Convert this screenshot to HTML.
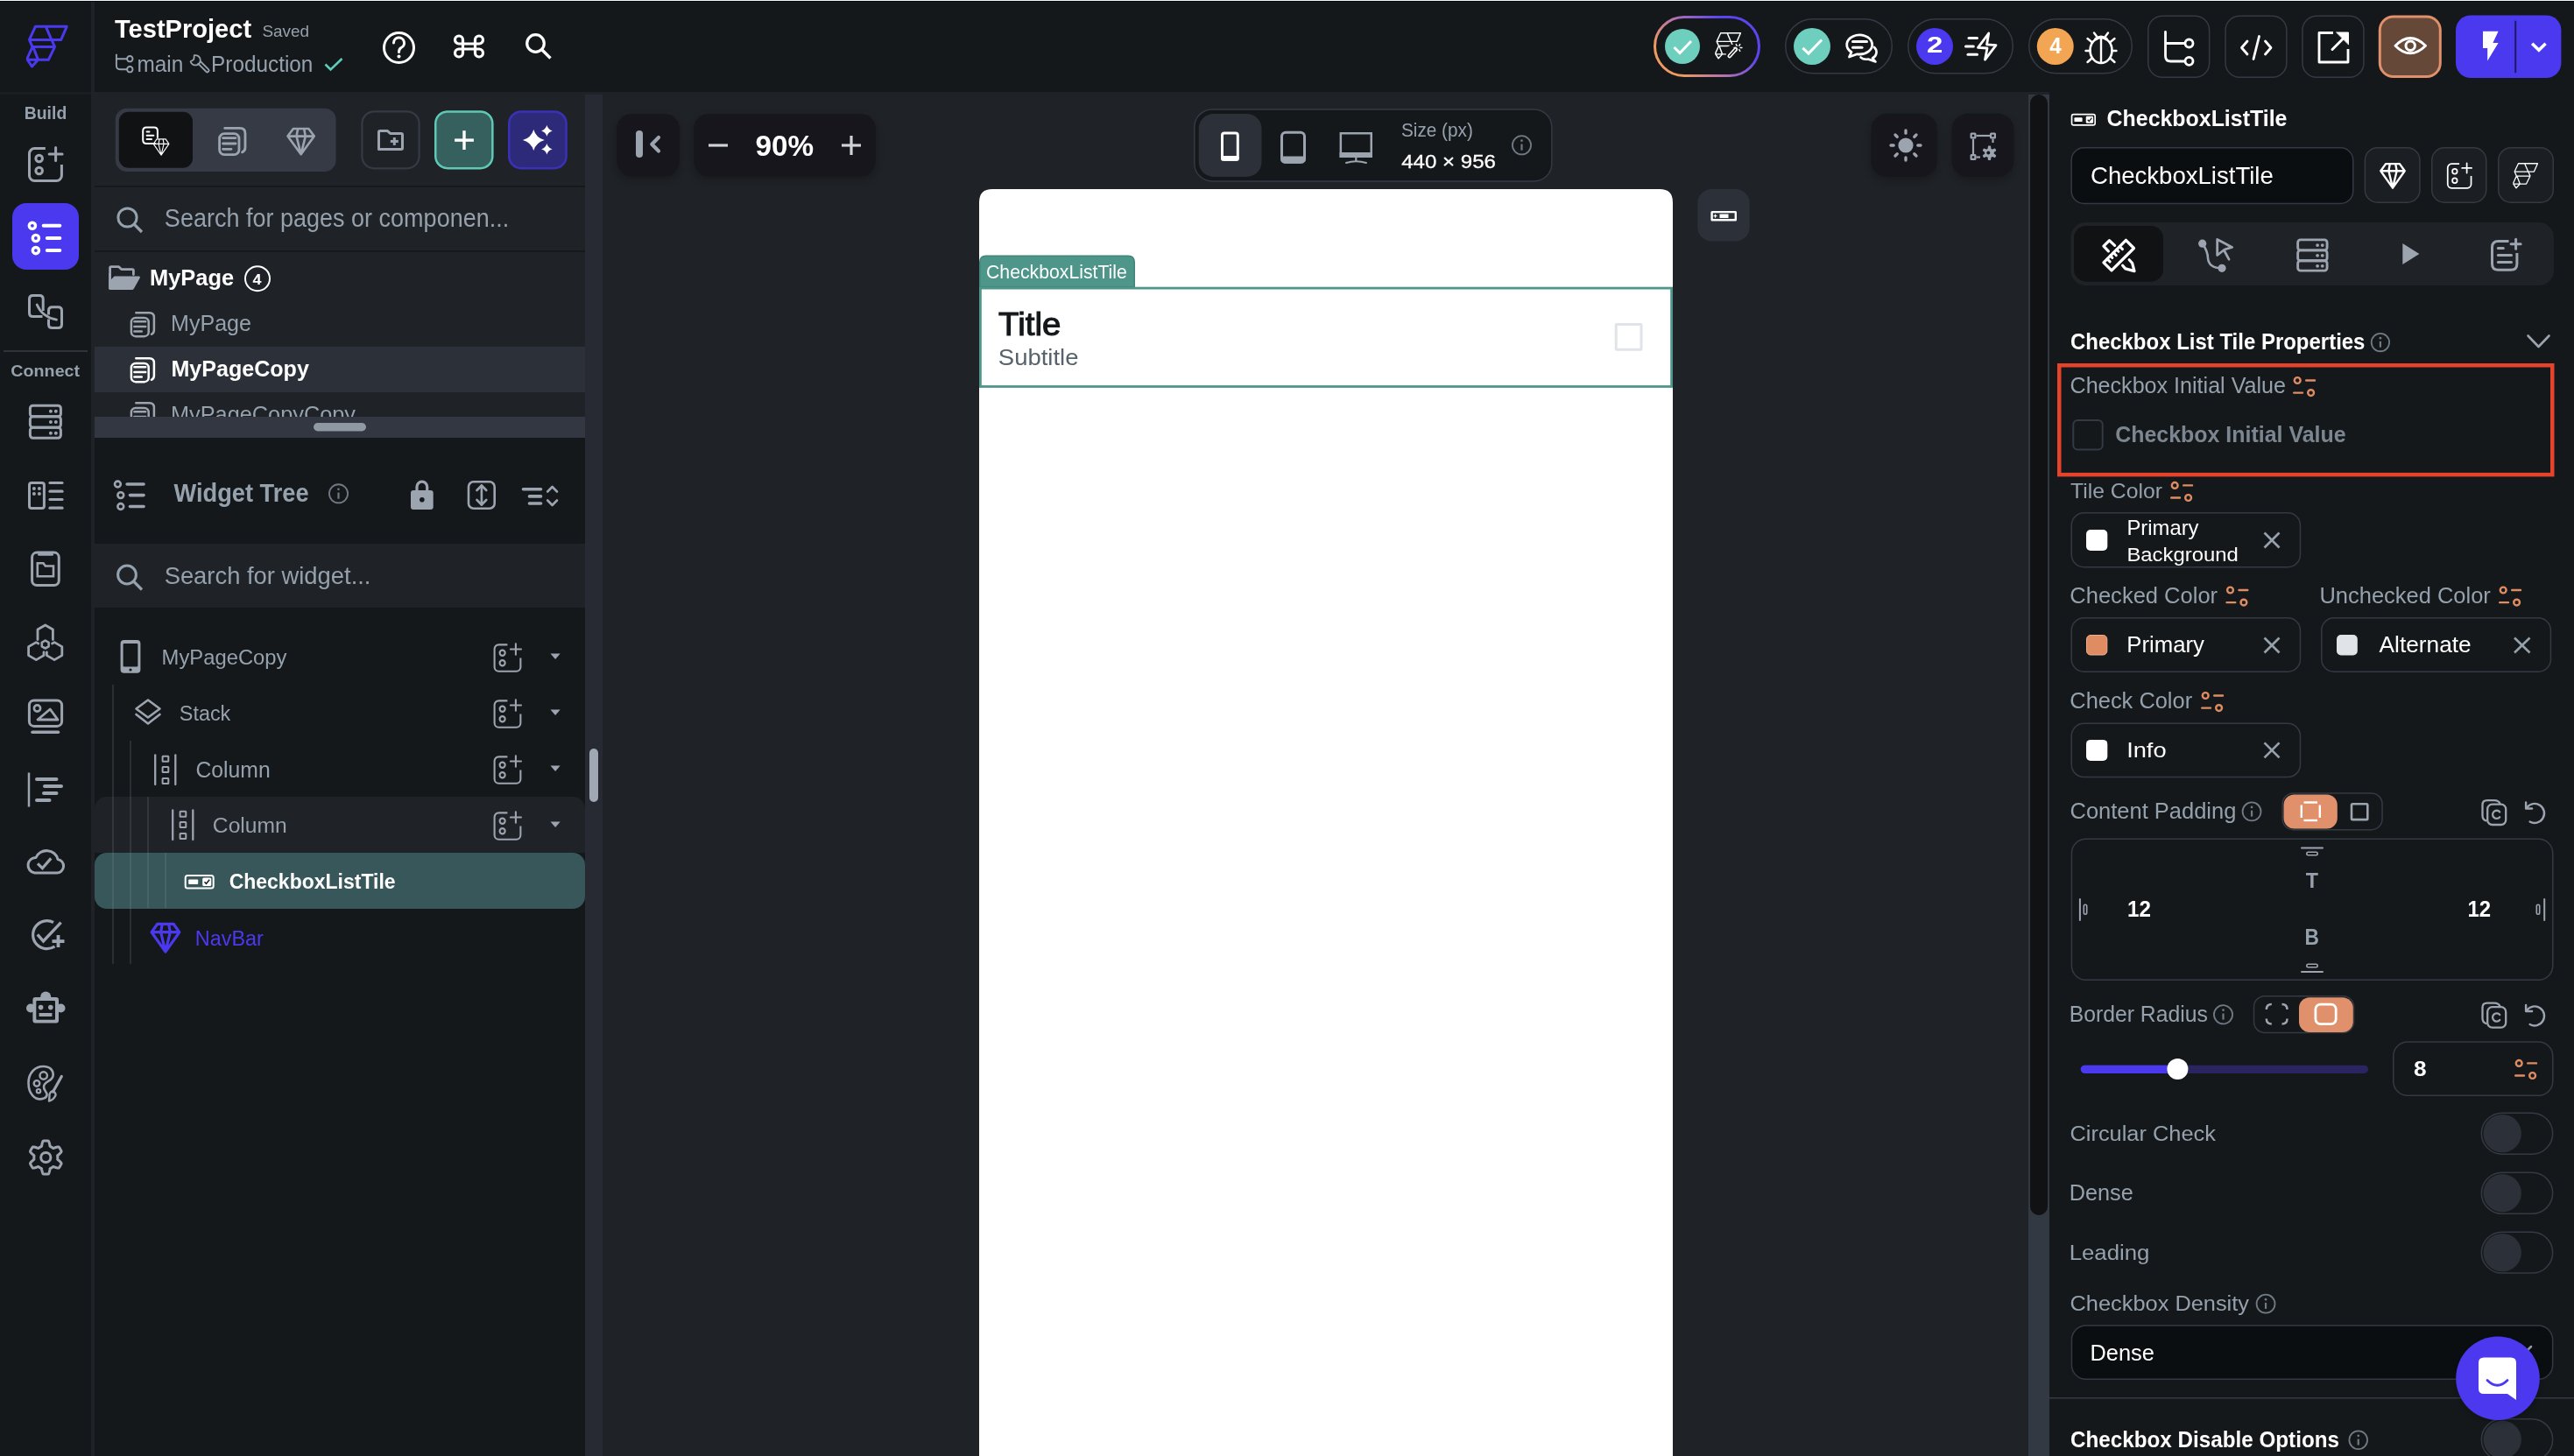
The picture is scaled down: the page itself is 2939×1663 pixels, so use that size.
<!DOCTYPE html>
<html><head><meta charset="utf-8"><title>FlutterFlow</title>
<style>
html,body{margin:0;padding:0;background:#1f2226;overflow:hidden;width:2939px;height:1663px}
svg{display:block;font-family:"Liberation Sans",sans-serif}
text{font-family:"Liberation Sans",sans-serif;white-space:pre}
svg{will-change:transform}
</style></head><body>
<svg width="2939" height="1663" viewBox="0 0 2939 1663">
<defs><linearGradient id="gradb" x1="0" y1="0.75" x2="1" y2="0.25"><stop offset="0.1" stop-color="#f09a60"/><stop offset="0.45" stop-color="#b070b0"/><stop offset="0.8" stop-color="#5a45f0"/></linearGradient>
<filter id="shadow" x="-30%" y="-30%" width="160%" height="160%"><feDropShadow dx="0" dy="4" stdDeviation="6" flood-color="#000" flood-opacity="0.25"/></filter>
<filter id="shadow2" x="-30%" y="-30%" width="160%" height="160%"><feDropShadow dx="0" dy="2" stdDeviation="4" flood-color="#000" flood-opacity="0.3"/></filter>
<clipPath id="clipPages"><rect x="108" y="440" width="560" height="36"/></clipPath>
</defs>
<rect x="0.00" y="0.00" width="2939.00" height="1663.00" rx="0" fill="#1f2226" />
<rect x="0.00" y="0.00" width="2939.00" height="105.00" rx="0" fill="#15181b" />
<rect x="0.00" y="0.00" width="2939.00" height="1.00" rx="0" fill="#f0f6fa" />
<rect x="0.00" y="1.00" width="2939.00" height="1.00" rx="0" fill="#05090c" />
<rect x="104.00" y="2.00" width="4.00" height="103.00" rx="0" fill="#1f2226" />
<rect x="0.00" y="105.00" width="104.00" height="1558.00" rx="0" fill="#15181b" />
<rect x="0.00" y="105.00" width="104.00" height="3.00" rx="0" fill="#1b1e21" />
<rect x="108.00" y="105.00" width="560.00" height="371.00" rx="0" fill="#1f2226" />
<rect x="108.00" y="500.00" width="560.00" height="1163.00" rx="0" fill="#15181b" />
<rect x="668.00" y="108.00" width="20.00" height="1555.00" rx="0" fill="#272a33" />
<rect x="673.00" y="855.00" width="10.00" height="61.00" rx="5" fill="#a0a8b4" />
<rect x="2316.00" y="108.00" width="24.00" height="1555.00" rx="0" fill="#333943" />
<rect x="2318.00" y="108.00" width="20.00" height="1280.00" rx="10" fill="#111214" />
<rect x="2340.00" y="105.00" width="599.00" height="1558.00" rx="0" fill="#15181b" />
<text x="131.00" y="43.00" font-size="28.57" font-weight="700" fill="#fff" textLength="156.14" lengthAdjust="spacingAndGlyphs" >TestProject</text>
<text x="299.41" y="42.00" font-size="19.00" font-weight="400" fill="#95a1ac" textLength="53.65" lengthAdjust="spacingAndGlyphs" >Saved</text>
<text x="156.47" y="82.00" font-size="26.37" font-weight="400" fill="#95a1ac" textLength="52.90" lengthAdjust="spacingAndGlyphs" >main</text>
<text x="241.10" y="82.00" font-size="25.00" font-weight="400" fill="#95a1ac" textLength="116.27" lengthAdjust="spacingAndGlyphs" >Production</text>
<rect x="2038.75" y="21.75" width="121.50" height="62.00" rx="31.25" fill="none" stroke="#343a44" stroke-width="1.5" />
<rect x="2178.75" y="21.75" width="119.50" height="62.00" rx="31.25" fill="none" stroke="#343a44" stroke-width="1.5" />
<rect x="2316.75" y="21.75" width="117.50" height="62.00" rx="31.25" fill="none" stroke="#343a44" stroke-width="1.5" />
<rect x="1889.50" y="19.50" width="119.00" height="67.00" rx="33.50" fill="none" stroke="url(#gradb)" stroke-width="3" />
<circle cx="1921.00" cy="53.00" r="20.00" fill="#6fcfbf" />
<circle cx="2069.00" cy="53.00" r="21.00" fill="#6fcfbf" />
<circle cx="2209.00" cy="53.00" r="21.00" fill="#4b39ef" />
<circle cx="2346.75" cy="53.00" r="21.00" fill="#f2a552" />
<text x="2199.97" y="60.40" font-size="26.29" font-weight="700" fill="#fff" textLength="18.35" lengthAdjust="spacingAndGlyphs" >2</text>
<text x="2340.30" y="60.70" font-size="25.57" font-weight="700" fill="#fff" textLength="13.45" lengthAdjust="spacingAndGlyphs" >4</text>
<rect x="2452.75" y="18.15" width="69.90" height="70.10" rx="16.25" fill="none" stroke="#343a44" stroke-width="1.5" />
<rect x="2541.05" y="18.15" width="69.80" height="70.10" rx="16.25" fill="none" stroke="#343a44" stroke-width="1.5" />
<rect x="2628.95" y="18.15" width="70.00" height="70.10" rx="16.25" fill="none" stroke="#343a44" stroke-width="1.5" />
<rect x="2717.30" y="18.90" width="69.00" height="68.60" rx="15.50" fill="#664838" stroke="#e0906a" stroke-width="3" />
<rect x="2804.00" y="17.40" width="120.40" height="71.60" rx="17" fill="#4b39ef" />
<rect x="2871.20" y="23.70" width="2.00" height="59.50" rx="0" fill="#1f1a60" />
<text x="27.79" y="136.00" font-size="19.29" font-weight="700" fill="#95a1ac" textLength="48.45" lengthAdjust="spacingAndGlyphs" >Build</text>
<rect x="14.00" y="232.00" width="76.00" height="76.00" rx="16" fill="#4b39ef" />
<rect x="4.00" y="400.00" width="96.00" height="2.00" rx="0" fill="#2f343b" />
<text x="12.39" y="430.00" font-size="18.86" font-weight="700" fill="#95a1ac" textLength="78.71" lengthAdjust="spacingAndGlyphs" >Connect</text>
<rect x="131.80" y="123.70" width="251.80" height="72.30" rx="13" fill="#353a45" />
<rect x="135.80" y="127.80" width="84.20" height="64.00" rx="11" fill="#111214" />
<rect x="413.40" y="127.30" width="65.20" height="65.00" rx="13.90" fill="none" stroke="#353a45" stroke-width="2.2" />
<rect x="497.25" y="127.45" width="65.10" height="64.70" rx="13.75" fill="#35605e" stroke="#5fc9b6" stroke-width="2.5" />
<rect x="581.25" y="127.45" width="65.30" height="64.70" rx="13.75" fill="#2e2a7a" stroke="#3b31b8" stroke-width="2.5" />
<rect x="108.00" y="212.00" width="560.00" height="2.00" rx="0" fill="#16181b" />
<text x="187.86" y="259.00" font-size="28.57" font-weight="400" fill="#95a1ac" textLength="393.38" lengthAdjust="spacingAndGlyphs" >Search for pages or componen...</text>
<rect x="108.00" y="286.00" width="560.00" height="2.00" rx="0" fill="#16181b" />
<text x="171.01" y="326.30" font-size="25.57" font-weight="700" fill="#fff" textLength="96.12" lengthAdjust="spacingAndGlyphs" >MyPage</text>
<circle cx="294.00" cy="318.20" r="14.00" fill="none" stroke="#fff" stroke-width="2" />
<text x="288.60" y="325.20" font-size="17.14" font-weight="700" fill="#fff" textLength="9.99" lengthAdjust="spacingAndGlyphs" >4</text>
<text x="195.04" y="378.30" font-size="25.29" font-weight="400" fill="#95a1ac" textLength="91.97" lengthAdjust="spacingAndGlyphs" >MyPage</text>
<rect x="108.00" y="396.00" width="560.00" height="52.00" rx="0" fill="#2c3039" />
<text x="195.43" y="430.00" font-size="25.14" font-weight="700" fill="#fff" textLength="157.41" lengthAdjust="spacingAndGlyphs" >MyPageCopy</text>
<g clip-path="url(#clipPages)">
<text x="195.02" y="482.00" font-size="25.71" font-weight="400" fill="#95a1ac" textLength="210.98" lengthAdjust="spacingAndGlyphs" >MyPageCopyCopy</text>
</g>
<rect x="108.00" y="476.00" width="560.00" height="24.00" rx="0" fill="#323741" />
<rect x="358.00" y="483.00" width="60.00" height="9.50" rx="4.75" fill="#8f98a3" />
<text x="198.50" y="573.00" font-size="28.57" font-weight="700" fill="#95a1ac" textLength="154.18" lengthAdjust="spacingAndGlyphs" >Widget Tree</text>
<rect x="108.00" y="621.00" width="560.00" height="73.00" rx="0" fill="#1f2226" />
<text x="187.64" y="666.60" font-size="28.00" font-weight="400" fill="#95a1ac" textLength="235.83" lengthAdjust="spacingAndGlyphs" >Search for widget...</text>
<text x="184.64" y="759.00" font-size="23.43" font-weight="400" fill="#95a1ac" textLength="142.86" lengthAdjust="spacingAndGlyphs" >MyPageCopy</text>
<text x="204.77" y="822.80" font-size="23.14" font-weight="400" fill="#95a1ac" textLength="58.57" lengthAdjust="spacingAndGlyphs" >Stack</text>
<text x="223.44" y="887.50" font-size="25.29" font-weight="400" fill="#95a1ac" textLength="85.25" lengthAdjust="spacingAndGlyphs" >Column</text>
<rect x="108.00" y="910.00" width="560.00" height="64.00" rx="14" fill="#1f2226" />
<rect x="108.00" y="950.00" width="560.00" height="24.00" rx="0" fill="#1f2226" />
<text x="242.84" y="950.70" font-size="23.14" font-weight="400" fill="#95a1ac" textLength="84.94" lengthAdjust="spacingAndGlyphs" >Column</text>
<rect x="108.00" y="974.00" width="560.00" height="64.00" rx="14" fill="#37575a" />
<text x="261.68" y="1015.00" font-size="23.57" font-weight="700" fill="#fff" textLength="189.89" lengthAdjust="spacingAndGlyphs" >CheckboxListTile</text>
<text x="222.77" y="1079.50" font-size="24.29" font-weight="400" fill="#4b39ef" textLength="78.15" lengthAdjust="spacingAndGlyphs" >NavBar</text>
<rect x="128.25" y="782.00" width="1.50" height="319.00" rx="0" fill="#a0a8b4" fill-opacity="0.22"/>
<rect x="148.25" y="846.00" width="1.50" height="255.00" rx="0" fill="#a0a8b4" fill-opacity="0.22"/>
<rect x="168.25" y="910.00" width="1.50" height="127.00" rx="0" fill="#a0a8b4" fill-opacity="0.22"/>
<rect x="188.25" y="974.00" width="1.50" height="63.00" rx="0" fill="#a0a8b4" fill-opacity="0.22"/>
<rect x="704.00" y="130.00" width="72.00" height="71.50" rx="17" fill="#15181b" filter="url(#shadow)"/>
<rect x="792.00" y="130.00" width="208.00" height="71.50" rx="17" fill="#15181b" filter="url(#shadow)"/>
<text x="862.46" y="178.40" font-size="32.86" font-weight="700" fill="#fff" textLength="66.61" lengthAdjust="spacingAndGlyphs" >90%</text>
<rect x="1363.75" y="124.95" width="408.10" height="82.00" rx="20.25" fill="#15181b" stroke="#343a44" stroke-width="1.5" />
<rect x="1368.70" y="130.00" width="71.80" height="71.90" rx="17" fill="#2c3039" />
<text x="1599.95" y="156.00" font-size="21.43" font-weight="400" fill="#95a1ac" textLength="81.92" lengthAdjust="spacingAndGlyphs" >Size (px)</text>
<text x="1600.22" y="192.00" font-size="22.86" font-weight="400" fill="#fff" textLength="107.75" lengthAdjust="spacingAndGlyphs" stroke="#fff" stroke-width="0.3">440 × 956</text>
<rect x="2136.30" y="129.80" width="75.50" height="72.20" rx="18" fill="#15181b" filter="url(#shadow)"/>
<rect x="2228.50" y="129.80" width="71.00" height="72.20" rx="18" fill="#15181b" filter="url(#shadow)"/>
<rect x="1938.30" y="216.00" width="59.40" height="59.40" rx="16" fill="#2c3039" />
<path d="M1118,1663 L1118,231 Q1118,216 1133,216 L1895,216 Q1910,216 1910,231 L1910,1663 Z" fill="#ffffff" />
<path d="M1118.8,327.7 L1118.8,299.4 Q1118.8,292.2 1126,292.2 L1288,292.2 Q1295.2,292.2 1295.2,299.4 L1295.2,327.7 Z" fill="#4f968a" stroke="#428579" stroke-width="1.6" stroke-linejoin="round" stroke-linecap="round" />
<text x="1126.00" y="317.90" font-size="21.71" font-weight="400" fill="#fff" textLength="160.86" lengthAdjust="spacingAndGlyphs" >CheckboxListTile</text>
<rect x="1119.40" y="329.10" width="789.20" height="112.40" rx="0.00" fill="none" stroke="#4f968a" stroke-width="2.8" />
<text x="1140.10" y="383.00" font-size="37.14" font-weight="400" fill="#14181b" textLength="71.26" lengthAdjust="spacingAndGlyphs" stroke="#14181b" stroke-width="1.1">Title</text>
<text x="1139.84" y="417.00" font-size="24.86" font-weight="400" fill="#57636c" textLength="91.67" lengthAdjust="spacingAndGlyphs" >Subtitle</text>
<rect x="1845.20" y="370.50" width="28.80" height="28.80" rx="0.50" fill="none" stroke="#e0e3e7" stroke-width="3" />
<text x="2405.62" y="144.20" font-size="26.00" font-weight="700" fill="#fff" textLength="205.80" lengthAdjust="spacingAndGlyphs" >CheckboxListTile</text>
<rect x="2365.15" y="168.75" width="321.60" height="63.70" rx="14.25" fill="#0b0e11" stroke="#343a44" stroke-width="1.5" />
<text x="2387.01" y="209.70" font-size="27.57" font-weight="400" fill="#fff" textLength="208.81" lengthAdjust="spacingAndGlyphs" >CheckboxListTile</text>
<rect x="2700.35" y="168.75" width="62.60" height="62.50" rx="14.25" fill="#1b1e22" stroke="#343a43" stroke-width="1.5" />
<rect x="2776.75" y="168.75" width="62.00" height="62.50" rx="14.25" fill="#1b1e22" stroke="#343a43" stroke-width="1.5" />
<rect x="2852.75" y="168.75" width="62.50" height="62.50" rx="14.25" fill="#1b1e22" stroke="#343a43" stroke-width="1.5" />
<rect x="2364.40" y="254.00" width="551.60" height="72.00" rx="17" fill="#1f2226" />
<rect x="2368.00" y="258.00" width="102.00" height="63.70" rx="14" fill="#111214" />
<text x="2363.95" y="398.50" font-size="25.71" font-weight="700" fill="#fff" textLength="336.52" lengthAdjust="spacingAndGlyphs" >Checkbox List Tile Properties</text>
<rect x="2351.25" y="417.25" width="563.00" height="124.90" rx="0.00" fill="none" stroke="#e5432b" stroke-width="4.5" />
<text x="2363.52" y="449.00" font-size="25.71" font-weight="400" fill="#95a1ac" textLength="246.49" lengthAdjust="spacingAndGlyphs" >Checkbox Initial Value</text>
<rect x="2367.30" y="480.00" width="33.40" height="33.40" rx="5.00" fill="none" stroke="#343a43" stroke-width="2" />
<text x="2415.22" y="505.20" font-size="26.00" font-weight="700" fill="#7c8690" textLength="263.40" lengthAdjust="spacingAndGlyphs" >Checkbox Initial Value</text>
<text x="2364.11" y="569.30" font-size="24.71" font-weight="400" fill="#95a1ac" textLength="104.81" lengthAdjust="spacingAndGlyphs" >Tile Color</text>
<rect x="2365.25" y="585.75" width="261.20" height="62.00" rx="14.25" fill="none" stroke="#343a44" stroke-width="1.5" />
<rect x="2382.00" y="605.00" width="24.30" height="23.90" rx="5" fill="#ffffff" />
<text x="2428.44" y="610.80" font-size="24.00" font-weight="400" fill="#fff" textLength="82.06" lengthAdjust="spacingAndGlyphs" >Primary</text>
<text x="2428.43" y="640.50" font-size="22.14" font-weight="400" fill="#fff" textLength="127.41" lengthAdjust="spacingAndGlyphs" >Background</text>
<text x="2363.30" y="689.00" font-size="24.86" font-weight="400" fill="#95a1ac" textLength="168.82" lengthAdjust="spacingAndGlyphs" >Checked Color</text>
<text x="2648.41" y="689.00" font-size="24.86" font-weight="400" fill="#95a1ac" textLength="195.42" lengthAdjust="spacingAndGlyphs" >Unchecked Color</text>
<rect x="2365.25" y="705.75" width="261.20" height="61.50" rx="14.25" fill="none" stroke="#343a44" stroke-width="1.5" />
<rect x="2382.50" y="725.50" width="23.30" height="22.50" rx="4.50" fill="#e08c62" stroke="#f0b090" stroke-width="1" />
<text x="2428.29" y="744.80" font-size="24.86" font-weight="400" fill="#fff" textLength="88.71" lengthAdjust="spacingAndGlyphs" >Primary</text>
<rect x="2650.75" y="705.75" width="261.70" height="61.50" rx="14.25" fill="none" stroke="#343a44" stroke-width="1.5" />
<rect x="2668.00" y="725.00" width="23.80" height="23.50" rx="5" fill="#e0e3e7" />
<text x="2716.60" y="744.80" font-size="24.86" font-weight="400" fill="#fff" textLength="105.06" lengthAdjust="spacingAndGlyphs" >Alternate</text>
<text x="2363.31" y="809.40" font-size="24.86" font-weight="400" fill="#95a1ac" textLength="139.82" lengthAdjust="spacingAndGlyphs" >Check Color</text>
<rect x="2365.25" y="826.25" width="261.20" height="61.30" rx="14.25" fill="none" stroke="#343a44" stroke-width="1.5" />
<rect x="2382.00" y="844.90" width="24.30" height="24.10" rx="5" fill="#ffffff" />
<text x="2428.17" y="864.70" font-size="24.71" font-weight="400" fill="#fff" textLength="45.43" lengthAdjust="spacingAndGlyphs" >Info</text>
<text x="2363.51" y="935.30" font-size="25.71" font-weight="400" fill="#95a1ac" textLength="189.83" lengthAdjust="spacingAndGlyphs" >Content Padding</text>
<rect x="2606.15" y="906.05" width="113.90" height="41.60" rx="12.25" fill="none" stroke="#343a44" stroke-width="1.5" />
<rect x="2607.50" y="907.40" width="61.30" height="39.20" rx="12" fill="#e0906a" />
<rect x="2365.45" y="958.25" width="549.30" height="161.00" rx="16.25" fill="none" stroke="#343a44" stroke-width="1.5" />
<text x="2632.80" y="1014.40" font-size="24.14" font-weight="700" fill="#95a1ac" textLength="14.23" lengthAdjust="spacingAndGlyphs" >T</text>
<text x="2631.38" y="1079.00" font-size="25.14" font-weight="700" fill="#95a1ac" textLength="16.41" lengthAdjust="spacingAndGlyphs" >B</text>
<text x="2428.99" y="1047.00" font-size="25.29" font-weight="700" fill="#fff" textLength="26.91" lengthAdjust="spacingAndGlyphs" >12</text>
<text x="2817.51" y="1047.00" font-size="25.29" font-weight="700" fill="#fff" textLength="26.59" lengthAdjust="spacingAndGlyphs" >12</text>
<text x="2362.77" y="1167.00" font-size="25.86" font-weight="400" fill="#95a1ac" textLength="158.00" lengthAdjust="spacingAndGlyphs" >Border Radius</text>
<rect x="2573.55" y="1137.75" width="114.10" height="41.70" rx="12.25" fill="none" stroke="#343a44" stroke-width="1.5" />
<rect x="2625.00" y="1139.20" width="61.80" height="39.70" rx="12" fill="#e0906a" />
<rect x="2375.70" y="1216.70" width="328.30" height="9.20" rx="4.6" fill="#2a2560" />
<rect x="2375.70" y="1216.70" width="110.30" height="9.20" rx="4.6" fill="#4b39ef" />
<circle cx="2486.40" cy="1221.00" r="12.00" fill="#ffffff" />
<rect x="2732.75" y="1190.05" width="182.00" height="61.20" rx="16.25" fill="none" stroke="#343a44" stroke-width="1.5" />
<text x="2755.98" y="1228.50" font-size="23.57" font-weight="700" fill="#fff" textLength="14.57" lengthAdjust="spacingAndGlyphs" >8</text>
<text x="2363.51" y="1303.00" font-size="24.29" font-weight="400" fill="#95a1ac" textLength="166.39" lengthAdjust="spacingAndGlyphs" >Circular Check</text>
<text x="2362.73" y="1371.00" font-size="25.00" font-weight="400" fill="#95a1ac" textLength="73.00" lengthAdjust="spacingAndGlyphs" >Dense</text>
<text x="2362.69" y="1438.60" font-size="24.29" font-weight="400" fill="#95a1ac" textLength="91.76" lengthAdjust="spacingAndGlyphs" >Leading</text>
<rect x="2833.35" y="1271.15" width="81.30" height="47.00" rx="23.50" fill="none" stroke="#343a44" stroke-width="1.5" />
<circle cx="2857.20" cy="1294.65" r="21.70" fill="#2c3039" />
<rect x="2833.35" y="1339.25" width="81.30" height="47.00" rx="23.50" fill="none" stroke="#343a44" stroke-width="1.5" />
<circle cx="2857.20" cy="1362.75" r="21.70" fill="#2c3039" />
<rect x="2833.35" y="1407.25" width="81.30" height="46.80" rx="23.50" fill="none" stroke="#343a44" stroke-width="1.5" />
<circle cx="2857.20" cy="1430.65" r="21.70" fill="#2c3039" />
<rect x="2833.35" y="1620.75" width="81.30" height="47.00" rx="23.50" fill="none" stroke="#343a44" stroke-width="1.5" />
<circle cx="2857.20" cy="1644.25" r="21.70" fill="#2c3039" />
<text x="2363.51" y="1496.70" font-size="24.29" font-weight="400" fill="#95a1ac" textLength="204.49" lengthAdjust="spacingAndGlyphs" >Checkbox Density</text>
<rect x="2365.45" y="1513.95" width="549.20" height="61.30" rx="16.25" fill="#0b0e11" stroke="#343a44" stroke-width="1.5" />
<text x="2386.52" y="1553.50" font-size="26.43" font-weight="400" fill="#fff" textLength="73.31" lengthAdjust="spacingAndGlyphs" >Dense</text>
<rect x="2340.00" y="1596.00" width="599.00" height="1.50" rx="0" fill="#343a44" />
<text x="2363.94" y="1652.70" font-size="25.43" font-weight="700" fill="#fff" textLength="307.04" lengthAdjust="spacingAndGlyphs" >Checkbox Disable Options</text>
<path d="M2878,1538 L2884,1544 L2890,1538" fill="none" stroke="#95a1ac" stroke-width="2.5" stroke-linejoin="round" stroke-linecap="round" />
<circle cx="2852.00" cy="1574.25" r="47.75" fill="#4b39ef" filter="url(#shadow2)"/>
<g transform="translate(30.00,29.00) scale(1.0000,1.0000)"><path d="M10.5,1.2 H46.3 L39.7,16.4 H3.5 Z M22.2,1.2 L28.8,16.4 M3.5,16.4 L7,24.6 H32.5 L29,16.4 M7,24.6 L1.4,37 V39.3 H25.3 L32.5,24.6 M8,25 L13.5,39.3 L6.5,47 L1.4,39.3" fill="none" stroke="#4b39ef" stroke-width="3" stroke-linejoin="round" stroke-linecap="round"/></g>
<path d="M132.9,61.8 V75 Q132.9,79.2 137.1,79.2 H145 M132.9,67.2 H145" fill="none" stroke="#95a1ac" stroke-width="1.9" stroke-linejoin="round" stroke-linecap="butt" />
<circle cx="148.30" cy="67.20" r="3.20" fill="none" stroke="#95a1ac" stroke-width="1.9" />
<circle cx="148.30" cy="79.20" r="3.20" fill="none" stroke="#95a1ac" stroke-width="1.9" />
<path d="M217.6,70.2 A5.7,5.7 0 1 0 221.8,63.2 L221.4,67.2 Q221.3,68.2 220.5,68.5 Z" fill="none" stroke="#95a1ac" stroke-width="1.8" stroke-linejoin="round" stroke-linecap="round" />
<path d="M226.2,72.6 L235.6,82 Q236.6,83 237.6,82 L238.2,81.4 Q239.2,80.4 238.2,79.4 L228.8,70" fill="none" stroke="#95a1ac" stroke-width="1.8" stroke-linejoin="round" stroke-linecap="round" />
<path d="M371.5,73.5 L377.5,79.5 L390.5,67" fill="none" stroke="#5ccdbb" stroke-width="2.6" stroke-linejoin="miter" stroke-linecap="butt" />
<circle cx="455.50" cy="54.50" r="17.00" fill="none" stroke="#fff" stroke-width="3" />
<path d="M449.5,49 A6,6 0 1 1 458,54.5 Q455.5,56 455.5,59.5" fill="none" stroke="#fff" stroke-width="3" stroke-linejoin="round" stroke-linecap="round" />
<circle cx="455.50" cy="64.50" r="2.00" fill="#fff" />
<path d="M528.5,45.5 V60.5 A4.5,4.5 0 1 1 524,56 H547 A4.5,4.5 0 1 1 542.5,60.5 V45.5 A4.5,4.5 0 1 1 547,50 H524 A4.5,4.5 0 1 1 528.5,45.5 Z" fill="none" stroke="#fff" stroke-width="3.2" stroke-linejoin="round" stroke-linecap="round" />
<circle cx="611.50" cy="49.50" r="9.80" fill="none" stroke="#fff" stroke-width="3.2" />
<line x1="618.50" y1="56.50" x2="628.50" y2="66.50" stroke="#fff" stroke-width="3.4" stroke-linecap="butt" />
<path d="M1911.5,54 L1918,60.5 L1931,47" fill="none" stroke="#fff" stroke-width="3" stroke-linejoin="miter" stroke-linecap="butt" />
<g transform="translate(1958.00,37.00) scale(0.6354,0.6327)"><path d="M10.5,1.2 H46.3 L39.7,16.4 H3.5 Z M22.2,1.2 L28.8,16.4 M3.5,16.4 L7,24.6 H32.5 L29,16.4 M7,24.6 L1.4,37 V39.3 H25.3 L32.5,24.6 M8,25 L13.5,39.3 L6.5,47 L1.4,39.3" fill="none" stroke="#fff" stroke-width="2.3" stroke-linejoin="round" stroke-linecap="round"/></g>
<circle cx="1980.00" cy="60.00" r="9.50" fill="#15181b" />
<line x1="1974.80" y1="64.00" x2="1981.80" y2="56.20" stroke="#fff" stroke-width="4.6" stroke-linecap="round" />
<line x1="1974.80" y1="64.00" x2="1981.80" y2="56.20" stroke="#15181b" stroke-width="1.4" stroke-linecap="round" />
<line x1="1987.00" y1="54.50" x2="1989.00" y2="54.50" stroke="#fff" stroke-width="1.4" stroke-linecap="round" />
<line x1="1985.75" y1="56.67" x2="1986.75" y2="58.40" stroke="#fff" stroke-width="1.4" stroke-linecap="round" />
<line x1="1983.25" y1="56.67" x2="1982.25" y2="58.40" stroke="#fff" stroke-width="1.4" stroke-linecap="round" />
<line x1="1982.00" y1="54.50" x2="1980.00" y2="54.50" stroke="#fff" stroke-width="1.4" stroke-linecap="round" />
<line x1="1983.25" y1="52.33" x2="1982.25" y2="50.60" stroke="#fff" stroke-width="1.4" stroke-linecap="round" />
<line x1="1985.75" y1="52.33" x2="1986.75" y2="50.60" stroke="#fff" stroke-width="1.4" stroke-linecap="round" />
<path d="M2058.4,54.9 L2065,61.1 L2080.1,45.5" fill="none" stroke="#fff" stroke-width="3" stroke-linejoin="miter" stroke-linecap="butt" />
<path d="M2111.5,65 L2114,59.5 A14.5,11 0 1 1 2120.5,61.8 Z" fill="none" stroke="#fff" stroke-width="2.8" stroke-linejoin="round" stroke-linecap="round" />
<line x1="2115.50" y1="47.50" x2="2131.50" y2="47.50" stroke="#fff" stroke-width="3" stroke-linecap="round" />
<line x1="2115.50" y1="54.20" x2="2126.00" y2="54.20" stroke="#fff" stroke-width="3" stroke-linecap="round" />
<path d="M2140,54 A9,8 0 0 1 2138,66.5 L2141.5,70.5 L2133,67.5 Q2128,68.5 2124.5,65.5" fill="none" stroke="#fff" stroke-width="2.6" stroke-linejoin="round" stroke-linecap="round" />
<path d="M2270.7,38 L2258.5,54.3 L2269,55 L2266.5,68.2 L2279,51.6 L2268.6,50.8 Z" fill="none" stroke="#fff" stroke-width="2.8" stroke-linejoin="round" stroke-linecap="round" />
<line x1="2248.00" y1="43.60" x2="2257.50" y2="43.60" stroke="#fff" stroke-width="3" stroke-linecap="round" />
<line x1="2244.50" y1="52.90" x2="2253.30" y2="52.90" stroke="#fff" stroke-width="3" stroke-linecap="round" />
<line x1="2247.00" y1="62.20" x2="2257.50" y2="62.20" stroke="#fff" stroke-width="3" stroke-linecap="round" />
<ellipse cx="2399" cy="57.5" rx="12.5" ry="14.5" fill="none" stroke="#fff" stroke-width="2.6"/>
<path d="M2393,44.5 Q2399,40 2405,44.5" fill="none" stroke="#fff" stroke-width="3.5" stroke-linejoin="round" stroke-linecap="round" />
<line x1="2399.00" y1="45.00" x2="2399.00" y2="71.50" stroke="#fff" stroke-width="2.4" stroke-linecap="round" />
<line x1="2383.50" y1="44.00" x2="2389.00" y2="48.50" stroke="#fff" stroke-width="2.4" stroke-linecap="round" />
<line x1="2414.50" y1="44.00" x2="2409.00" y2="48.50" stroke="#fff" stroke-width="2.4" stroke-linecap="round" />
<line x1="2381.50" y1="58.00" x2="2386.50" y2="58.00" stroke="#fff" stroke-width="2.4" stroke-linecap="round" />
<line x1="2411.50" y1="58.00" x2="2416.50" y2="58.00" stroke="#fff" stroke-width="2.4" stroke-linecap="round" />
<line x1="2383.50" y1="71.00" x2="2388.00" y2="67.00" stroke="#fff" stroke-width="2.4" stroke-linecap="round" />
<line x1="2414.50" y1="71.00" x2="2410.00" y2="67.00" stroke="#fff" stroke-width="2.4" stroke-linecap="round" />
<line x1="2391.00" y1="37.50" x2="2394.00" y2="41.50" stroke="#fff" stroke-width="2.4" stroke-linecap="round" />
<line x1="2407.00" y1="37.50" x2="2404.00" y2="41.50" stroke="#fff" stroke-width="2.4" stroke-linecap="round" />
<path d="M2472.5,36.5 V64 Q2472.5,70 2478.5,70 H2494.5 M2472.5,49.5 H2494.5" fill="none" stroke="#fff" stroke-width="2.8" stroke-linejoin="round" stroke-linecap="round" />
<circle cx="2499.50" cy="49.50" r="4.50" fill="none" stroke="#fff" stroke-width="2.8" />
<circle cx="2499.50" cy="69.80" r="4.50" fill="none" stroke="#fff" stroke-width="2.8" />
<path d="M2566,47 L2559.5,54.5 L2566,62 M2586.5,47 L2593,54.5 L2586.5,62 M2579.5,41.5 L2573,67.5" fill="none" stroke="#fff" stroke-width="2.8" stroke-linejoin="round" stroke-linecap="round" />
<path d="M2664,37.5 H2648 V71 H2681 V56" fill="none" stroke="#fff" stroke-width="2.8" stroke-linejoin="round" stroke-linecap="butt" />
<path d="M2663,56.5 L2676,43.5" fill="none" stroke="#fff" stroke-width="3" stroke-linejoin="round" stroke-linecap="round" />
<path d="M2668,37 H2681.5 V50.5 Z" fill="#fff" stroke="#fff" stroke-width="1" stroke-linejoin="round" stroke-linecap="round" />
<path d="M2735,52.2 Q2752,35 2769.5,52.2 Q2752,69.5 2735,52.2 Z" fill="none" stroke="#fff" stroke-width="3" stroke-linejoin="round" stroke-linecap="round" />
<circle cx="2752.20" cy="52.20" r="5.20" fill="none" stroke="#fff" stroke-width="3" />
<path d="M2835,35.8 H2852.6 L2846.4,49 H2852.6 L2840.2,69.6 V55.1 H2835 Z" fill="#fff" />
<path d="M2891.2,49.7 L2898.9,57.2 L2906.6,49.7" fill="none" stroke="#fff" stroke-width="3.6" stroke-linejoin="miter" stroke-linecap="butt" />
<g transform="translate(31.50,168.00) scale(0.9976,1.0000)"><g fill="none" stroke="#9ca4b0" stroke-width="3" stroke-linecap="butt" stroke-linejoin="round"><path d="M20.4,1.6 H8 A6,6 0 0 0 2,7.6 V32.5 A6,6 0 0 0 8,38.5 H33 A6,6 0 0 0 39,32.5 V20"/><circle cx="13.2" cy="13" r="3.8"/><circle cx="13.2" cy="27" r="3.8"/><path d="M32.2,0.4 V15.4 M24.7,7.9 H39.7" stroke-linecap="round"/></g></g>
<circle cx="36.90" cy="257.80" r="3.60" fill="none" stroke="#fff" stroke-width="3.4" />
<line x1="49.70" y1="257.80" x2="68.30" y2="257.80" stroke="#fff" stroke-width="4" stroke-linecap="round" />
<circle cx="40.90" cy="272.00" r="3.60" fill="none" stroke="#fff" stroke-width="3.4" />
<line x1="53.80" y1="272.00" x2="68.30" y2="272.00" stroke="#fff" stroke-width="4" stroke-linecap="round" />
<circle cx="40.90" cy="286.10" r="3.60" fill="none" stroke="#fff" stroke-width="3.4" />
<line x1="53.80" y1="286.10" x2="68.30" y2="286.10" stroke="#fff" stroke-width="4" stroke-linecap="round" />
<path d="M49.2,355 V341.5 Q49.2,337.5 45.2,337.5 H37.5 Q33.5,337.5 33.5,341.5 V357.5 Q33.5,361.5 37.5,361.5 H48.5" fill="none" stroke="#9ca4b0" stroke-width="3" stroke-linejoin="round" stroke-linecap="butt" />
<path d="M55.5,359.5 V354.7 Q55.5,350.7 59.5,350.7 H66.5 Q70.5,350.7 70.5,354.7 V370.5 Q70.5,374.5 66.5,374.5 H59.5 Q55.5,374.5 55.5,370.5 V364.5" fill="none" stroke="#9ca4b0" stroke-width="3" stroke-linejoin="round" stroke-linecap="butt" />
<path d="M42.2,348 Q48,362 64.5,365.2" fill="none" stroke="#9ca4b0" stroke-width="2.8" stroke-linejoin="round" stroke-linecap="round" />
<g transform="translate(32.90,461.70) scale(1.0000,1.0025)"><g fill="none" stroke="#9ca4b0" stroke-width="3" stroke-linejoin="round"><rect x="1.5" y="1.5" width="35" height="12.6" rx="3.2"/><rect x="1.5" y="14.1" width="35" height="12.4" rx="3.2"/><rect x="1.5" y="26.5" width="35" height="12" rx="3.2"/></g><g fill="#9ca4b0"><circle cx="25" cy="8" r="2"/><circle cx="30.9" cy="8" r="2"/><circle cx="25" cy="20.3" r="2"/><circle cx="30.9" cy="20.3" r="2"/><circle cx="25" cy="32.9" r="2"/><circle cx="30.9" cy="32.9" r="2"/></g></g>
<rect x="33.50" y="551.50" width="16.90" height="29.00" rx="2.50" fill="none" stroke="#9ca4b0" stroke-width="3" />
<circle cx="38.90" cy="558.00" r="2.00" fill="#9ca4b0" />
<circle cx="44.90" cy="558.00" r="2.00" fill="#9ca4b0" />
<circle cx="38.90" cy="564.00" r="2.00" fill="#9ca4b0" />
<circle cx="44.90" cy="564.00" r="2.00" fill="#9ca4b0" />
<line x1="57.00" y1="551.50" x2="71.00" y2="551.50" stroke="#9ca4b0" stroke-width="3.2" stroke-linecap="round" />
<line x1="57.00" y1="561.20" x2="71.00" y2="561.20" stroke="#9ca4b0" stroke-width="3.2" stroke-linecap="round" />
<line x1="57.00" y1="570.50" x2="71.00" y2="570.50" stroke="#9ca4b0" stroke-width="3.2" stroke-linecap="round" />
<line x1="57.00" y1="580.20" x2="71.00" y2="580.20" stroke="#9ca4b0" stroke-width="3.2" stroke-linecap="round" />
<rect x="36.60" y="631.10" width="30.65" height="37.40" rx="5.50" fill="none" stroke="#9ca4b0" stroke-width="3" />
<line x1="44.50" y1="633.30" x2="59.50" y2="633.30" stroke="#9ca4b0" stroke-width="3" stroke-linecap="round" />
<path d="M42.8,643.2 H49.5 L51.8,646.5 H61 V658.2 H42.8 Z" fill="none" stroke="#9ca4b0" stroke-width="2.6" stroke-linejoin="miter" stroke-linecap="round" />
<path d="M43,730.5 V719 L51.7,714 L60.4,719 V730.5" fill="none" stroke="#9ca4b0" stroke-width="2.8" stroke-linejoin="round" stroke-linecap="round" />
<path d="M43.8,735 L41.3,733.6 L32.6,738.6 V748.6 L41.3,753.6 L50,748.6 V745" fill="none" stroke="#9ca4b0" stroke-width="2.8" stroke-linejoin="round" stroke-linecap="round" />
<path d="M59.6,735 L62.1,733.6 L70.8,738.6 V748.6 L62.1,753.6 L53.4,748.6 V745" fill="none" stroke="#9ca4b0" stroke-width="2.8" stroke-linejoin="round" stroke-linecap="round" />
<path d="M51.7,731.5 L55.6,733.8 V738.3 L51.7,740.5 L47.8,738.3 V733.8 Z" fill="none" stroke="#9ca4b0" stroke-width="2.6" stroke-linejoin="round" stroke-linecap="round" />
<rect x="33.40" y="800.00" width="37.20" height="29.40" rx="5.50" fill="none" stroke="#9ca4b0" stroke-width="3" />
<circle cx="42.50" cy="809.00" r="3.60" fill="none" stroke="#9ca4b0" stroke-width="2.6" />
<path d="M43,822 L57.2,810 L66,822 Z" fill="none" stroke="#9ca4b0" stroke-width="2.8" stroke-linejoin="round" stroke-linecap="round" />
<line x1="37.00" y1="836.20" x2="66.50" y2="836.20" stroke="#9ca4b0" stroke-width="3.5" stroke-linecap="round" />
<line x1="33.00" y1="882.50" x2="33.00" y2="921.50" stroke="#9ca4b0" stroke-width="2.5" stroke-linecap="butt" />
<line x1="42.00" y1="890.00" x2="64.50" y2="890.00" stroke="#9ca4b0" stroke-width="4" stroke-linecap="round" />
<line x1="51.00" y1="897.90" x2="70.00" y2="897.90" stroke="#9ca4b0" stroke-width="4" stroke-linecap="round" />
<line x1="50.00" y1="905.90" x2="64.50" y2="905.90" stroke="#9ca4b0" stroke-width="4" stroke-linecap="round" />
<line x1="42.00" y1="914.00" x2="56.50" y2="914.00" stroke="#9ca4b0" stroke-width="4" stroke-linecap="round" />
<path d="M39.5,997 H64.5 A7.8,7.8 0 0 0 66,981.5 A13,12 0 0 0 41,979.5 A8.8,8.8 0 0 0 39.5,997 Z" fill="none" stroke="#9ca4b0" stroke-width="3" stroke-linejoin="round" stroke-linecap="round" />
<path d="M43,986.4 L48.4,991.7 L58.2,980.4" fill="none" stroke="#9ca4b0" stroke-width="3.2" stroke-linejoin="miter" stroke-linecap="butt" />
<path d="M61,1053.5 A16,16 0 1 0 62.5,1081" fill="none" stroke="#9ca4b0" stroke-width="3.2" stroke-linejoin="round" stroke-linecap="butt" />
<path d="M42.8,1067.3 L49.5,1075 L69.6,1053.7" fill="none" stroke="#9ca4b0" stroke-width="3.4" stroke-linejoin="miter" stroke-linecap="butt" />
<line x1="59.50" y1="1075.10" x2="73.50" y2="1075.10" stroke="#9ca4b0" stroke-width="3.8" stroke-linecap="butt" />
<line x1="66.50" y1="1068.00" x2="66.50" y2="1082.00" stroke="#9ca4b0" stroke-width="3.8" stroke-linecap="butt" />
<circle cx="52.20" cy="1138.50" r="6.00" fill="#9ca4b0" />
<circle cx="35.00" cy="1151.50" r="5.00" fill="#9ca4b0" />
<circle cx="69.50" cy="1151.50" r="5.00" fill="#9ca4b0" />
<rect x="37.40" y="1139.00" width="29.60" height="29.50" rx="3" fill="#9ca4b0" />
<rect x="41.30" y="1143.00" width="21.70" height="21.70" rx="1" fill="#15181b" />
<circle cx="46.60" cy="1150.60" r="2.80" fill="#9ca4b0" />
<circle cx="57.80" cy="1150.60" r="2.80" fill="#9ca4b0" />
<rect x="44.60" y="1157.00" width="14.80" height="4.00" rx="0" fill="#9ca4b0" />
<path d="M50,1254.5 C40,1258 32.5,1249 32.5,1237 C32.5,1225 40.5,1218 49.5,1218 C57.5,1218 61.5,1223 60.5,1229 C59.5,1235 50.5,1235 50,1241 C49.5,1246 54.5,1247 53.5,1251 Q52.5,1254 50,1254.5 Z" fill="none" stroke="#9ca4b0" stroke-width="2.6" stroke-linejoin="round" stroke-linecap="round" />
<circle cx="49.70" cy="1228.50" r="4.20" fill="none" stroke="#9ca4b0" stroke-width="2.4" />
<circle cx="42.00" cy="1237.40" r="3.30" fill="none" stroke="#9ca4b0" stroke-width="2.4" />
<circle cx="44.00" cy="1246.20" r="2.20" fill="none" stroke="#9ca4b0" stroke-width="2.2" />
<path d="M70.3,1229.5 L60.5,1247" fill="none" stroke="#9ca4b0" stroke-width="3.2" stroke-linejoin="round" stroke-linecap="round" />
<path d="M60,1246 Q56,1248 56.5,1252 L56,1257.5 Q61,1256.5 63.5,1251 Q64,1248 60,1246 Z" fill="none" stroke="#9ca4b0" stroke-width="2.4" stroke-linejoin="round" stroke-linecap="round" />
<path d="M65.80,1322.00 L65.80,1322.35 L65.78,1322.71 L65.76,1323.06 L65.73,1323.41 L65.68,1323.76 L65.63,1324.11 L66.08,1324.55 L66.72,1325.07 L67.38,1325.62 L68.04,1326.22 L68.68,1326.85 L69.28,1327.52 L69.82,1328.20 L70.13,1328.84 L69.95,1329.31 L69.75,1329.77 L69.54,1330.22 L69.32,1330.67 L69.09,1331.11 L68.84,1331.55 L68.59,1331.98 L68.32,1332.40 L68.04,1332.82 L67.75,1333.23 L67.45,1333.63 L67.14,1334.02 L66.43,1334.07 L65.57,1333.95 L64.70,1333.76 L63.83,1333.53 L62.98,1333.25 L62.16,1332.96 L61.40,1332.65 L60.80,1332.49 L60.52,1332.71 L60.24,1332.92 L59.95,1333.13 L59.65,1333.32 L59.35,1333.51 L59.05,1333.69 L58.74,1333.86 L58.43,1334.03 L58.11,1334.18 L57.79,1334.33 L57.47,1334.47 L57.14,1334.60 L56.98,1335.21 L56.86,1336.02 L56.71,1336.87 L56.52,1337.74 L56.29,1338.62 L56.01,1339.47 L55.69,1340.28 L55.29,1340.86 L54.79,1340.94 L54.30,1341.00 L53.80,1341.04 L53.30,1341.07 L52.80,1341.09 L52.30,1341.10 L51.80,1341.09 L51.30,1341.07 L50.80,1341.04 L50.30,1341.00 L49.81,1340.94 L49.31,1340.86 L48.91,1340.28 L48.59,1339.47 L48.31,1338.62 L48.08,1337.74 L47.89,1336.87 L47.74,1336.02 L47.62,1335.21 L47.46,1334.60 L47.13,1334.47 L46.81,1334.33 L46.49,1334.18 L46.17,1334.03 L45.86,1333.86 L45.55,1333.69 L45.25,1333.51 L44.95,1333.32 L44.65,1333.13 L44.36,1332.92 L44.08,1332.71 L43.80,1332.49 L43.20,1332.65 L42.44,1332.96 L41.62,1333.25 L40.77,1333.53 L39.90,1333.76 L39.03,1333.95 L38.17,1334.07 L37.46,1334.02 L37.15,1333.63 L36.85,1333.23 L36.56,1332.82 L36.28,1332.40 L36.01,1331.98 L35.76,1331.55 L35.51,1331.11 L35.28,1330.67 L35.06,1330.22 L34.85,1329.77 L34.65,1329.31 L34.47,1328.84 L34.78,1328.20 L35.32,1327.52 L35.92,1326.85 L36.56,1326.22 L37.22,1325.62 L37.88,1325.07 L38.52,1324.55 L38.97,1324.11 L38.92,1323.76 L38.87,1323.41 L38.84,1323.06 L38.82,1322.71 L38.80,1322.35 L38.80,1322.00 L38.80,1321.65 L38.82,1321.29 L38.84,1320.94 L38.87,1320.59 L38.92,1320.24 L38.97,1319.89 L38.52,1319.45 L37.88,1318.93 L37.22,1318.38 L36.56,1317.78 L35.92,1317.15 L35.32,1316.48 L34.78,1315.80 L34.47,1315.16 L34.65,1314.69 L34.85,1314.23 L35.06,1313.78 L35.28,1313.33 L35.51,1312.89 L35.76,1312.45 L36.01,1312.02 L36.28,1311.60 L36.56,1311.18 L36.85,1310.77 L37.15,1310.37 L37.46,1309.98 L38.17,1309.93 L39.03,1310.05 L39.90,1310.24 L40.77,1310.47 L41.62,1310.75 L42.44,1311.04 L43.20,1311.35 L43.80,1311.51 L44.08,1311.29 L44.36,1311.08 L44.65,1310.87 L44.95,1310.68 L45.25,1310.49 L45.55,1310.31 L45.86,1310.14 L46.17,1309.97 L46.49,1309.82 L46.81,1309.67 L47.13,1309.53 L47.46,1309.40 L47.62,1308.79 L47.74,1307.98 L47.89,1307.13 L48.08,1306.26 L48.31,1305.38 L48.59,1304.53 L48.91,1303.72 L49.31,1303.14 L49.81,1303.06 L50.30,1303.00 L50.80,1302.96 L51.30,1302.93 L51.80,1302.91 L52.30,1302.90 L52.80,1302.91 L53.30,1302.93 L53.80,1302.96 L54.30,1303.00 L54.79,1303.06 L55.29,1303.14 L55.69,1303.72 L56.01,1304.53 L56.29,1305.38 L56.52,1306.26 L56.71,1307.13 L56.86,1307.98 L56.98,1308.79 L57.14,1309.40 L57.47,1309.53 L57.79,1309.67 L58.11,1309.82 L58.43,1309.97 L58.74,1310.14 L59.05,1310.31 L59.35,1310.49 L59.65,1310.68 L59.95,1310.87 L60.24,1311.08 L60.52,1311.29 L60.80,1311.51 L61.40,1311.35 L62.16,1311.04 L62.98,1310.75 L63.83,1310.47 L64.70,1310.24 L65.57,1310.05 L66.43,1309.93 L67.14,1309.98 L67.45,1310.37 L67.75,1310.77 L68.04,1311.18 L68.32,1311.60 L68.59,1312.02 L68.84,1312.45 L69.09,1312.89 L69.32,1313.33 L69.54,1313.78 L69.75,1314.23 L69.95,1314.69 L70.13,1315.16 L69.82,1315.80 L69.28,1316.48 L68.68,1317.15 L68.04,1317.78 L67.38,1318.38 L66.72,1318.93 L66.08,1319.45 L65.63,1319.89 L65.68,1320.24 L65.73,1320.59 L65.76,1320.94 L65.78,1321.29 L65.80,1321.65 Z" fill="none" stroke="#9ca4b0" stroke-width="3" stroke-linejoin="round" stroke-linecap="round" />
<circle cx="52.30" cy="1322.00" r="5.60" fill="none" stroke="#9ca4b0" stroke-width="3" />
<path d="M177,164 H167.2 Q163.2,164 163.2,160 V149.5 Q163.2,145.5 167.2,145.5 H175.9 Q179.9,145.5 179.9,149.5 V157" fill="none" stroke="#fff" stroke-width="2" stroke-linejoin="round" stroke-linecap="round" />
<line x1="167.60" y1="150.40" x2="170.50" y2="150.40" stroke="#fff" stroke-width="2" stroke-linecap="round" />
<line x1="167.60" y1="154.70" x2="175.40" y2="154.70" stroke="#fff" stroke-width="2" stroke-linecap="round" />
<line x1="167.60" y1="159.00" x2="173.00" y2="159.00" stroke="#fff" stroke-width="2" stroke-linecap="round" />
<g transform="translate(174.40,158.20) scale(0.5864,0.6188)"><g fill="none" stroke="#fff" stroke-width="1.9" stroke-linejoin="round" stroke-linecap="round"><path d="M7.8,1.2 H25.2 L31.6,9.9 L16.5,30.6 L1.4,9.9 Z M1.4,9.9 H31.6 M13,1.2 L11.4,9.9 L16.5,30.6 L21.6,9.9 L20,1.2"/></g></g>
<g transform="translate(248.00,145.00) scale(1.1296,1.1186)"><g fill="none" stroke="#9ca4b0" stroke-width="2.5" stroke-linecap="round" stroke-linejoin="round"><rect x="2.3" y="6.9" width="19.8" height="21.3" rx="5"/><path d="M7.7,1.3 H23 Q28.3,1.3 28.3,6.6 V21 Q28.3,24.5 25.3,25.8"/><path d="M5.8,11.2 H18.6 M5.8,17 H18.6 M5.8,22.6 H14.2"/></g></g>
<g transform="translate(327.10,145.75) scale(1.0030,0.9953)"><g fill="none" stroke="#9ca4b0" stroke-width="2.6" stroke-linejoin="round" stroke-linecap="round"><path d="M7.8,1.2 H25.2 L31.6,9.9 L16.5,30.6 L1.4,9.9 Z M1.4,9.9 H31.6 M13,1.2 L11.4,9.9 L16.5,30.6 L21.6,9.9 L20,1.2"/></g></g>
<path d="M432.5,170.5 V151 Q432.5,149.4 434,149.4 H442.2 L445.6,152.4 H458 Q459.5,152.4 459.5,154 V169 Q459.5,170.5 458,170.5 Z" fill="none" stroke="#9ca4b0" stroke-width="3" stroke-linejoin="round" stroke-linecap="round" />
<line x1="450.30" y1="157.00" x2="450.30" y2="165.90" stroke="#9ca4b0" stroke-width="3" stroke-linecap="butt" />
<line x1="445.80" y1="161.40" x2="454.80" y2="161.40" stroke="#9ca4b0" stroke-width="3" stroke-linecap="butt" />
<line x1="530.00" y1="149.20" x2="530.00" y2="171.00" stroke="#fff" stroke-width="3.4" stroke-linecap="butt" />
<line x1="519.10" y1="160.10" x2="540.90" y2="160.10" stroke="#fff" stroke-width="3.4" stroke-linecap="butt" />
<path d="M609.3,148.1 Q612.0279999999999,157.46 621.6999999999999,160.1 Q612.0279999999999,162.73999999999998 609.3,172.1 Q606.572,162.73999999999998 596.9,160.1 Q606.572,157.46 609.3,148.1 Z" fill="#fff" />
<path d="M624.4,143.1 Q625.786,148.014 630.6999999999999,149.4 Q625.786,150.786 624.4,155.70000000000002 Q623.014,150.786 618.1,149.4 Q623.014,148.014 624.4,143.1 Z" fill="#fff" />
<path d="M624.4,164.0 Q625.786,168.91400000000002 630.6999999999999,170.3 Q625.786,171.686 624.4,176.60000000000002 Q623.014,171.686 618.1,170.3 Q623.014,168.91400000000002 624.4,164.0 Z" fill="#fff" />
<circle cx="145.50" cy="248.50" r="10.60" fill="none" stroke="#95a1ac" stroke-width="3" />
<line x1="153.00" y1="256.00" x2="162.00" y2="265.00" stroke="#95a1ac" stroke-width="3.2" stroke-linecap="butt" />
<path d="M125.6,328 V306 Q125.6,304.6 127,304.6 H135.4 L138.6,307.6 H151 Q152.4,307.6 152.4,309 V313.5" fill="none" stroke="#9ca4b0" stroke-width="2.8" stroke-linejoin="round" stroke-linecap="round" />
<path d="M124.2,322 L130.5,315.5 H158.5 Q160.5,315.5 159.7,317.5 L153,329.5 Q152.2,331 150.5,331 H126 Q124.2,331 124.2,329.5 Z" fill="#9ca4b0" />
<rect x="124.20" y="312.00" width="2.80" height="18.00" rx="0" fill="#9ca4b0" />
<g transform="translate(147.60,356.00) scale(1.0000,1.0000)"><g fill="none" stroke="#9ca4b0" stroke-width="2.5" stroke-linecap="round" stroke-linejoin="round"><rect x="2.3" y="6.9" width="19.8" height="21.3" rx="5"/><path d="M7.7,1.3 H23 Q28.3,1.3 28.3,6.6 V21 Q28.3,24.5 25.3,25.8"/><path d="M5.8,11.2 H18.6 M5.8,17 H18.6 M5.8,22.6 H14.2"/></g></g>
<g transform="translate(147.60,408.00) scale(1.0000,1.0000)"><g fill="none" stroke="#fff" stroke-width="2.5" stroke-linecap="round" stroke-linejoin="round"><rect x="2.3" y="6.9" width="19.8" height="21.3" rx="5"/><path d="M7.7,1.3 H23 Q28.3,1.3 28.3,6.6 V21 Q28.3,24.5 25.3,25.8"/><path d="M5.8,11.2 H18.6 M5.8,17 H18.6 M5.8,22.6 H14.2"/></g></g>
<g clip-path="url(#clipPages)">
<g transform="translate(147.60,459.00) scale(1.0000,1.0000)"><g fill="none" stroke="#9ca4b0" stroke-width="2.5" stroke-linecap="round" stroke-linejoin="round"><rect x="2.3" y="6.9" width="19.8" height="21.3" rx="5"/><path d="M7.7,1.3 H23 Q28.3,1.3 28.3,6.6 V21 Q28.3,24.5 25.3,25.8"/><path d="M5.8,11.2 H18.6 M5.8,17 H18.6 M5.8,22.6 H14.2"/></g></g>
</g>
<circle cx="134.40" cy="553.00" r="3.40" fill="none" stroke="#9ca4b0" stroke-width="2.6" />
<line x1="145.10" y1="553.00" x2="164.00" y2="553.00" stroke="#9ca4b0" stroke-width="3.6" stroke-linecap="round" />
<circle cx="137.80" cy="565.60" r="3.40" fill="none" stroke="#9ca4b0" stroke-width="2.6" />
<line x1="148.50" y1="565.60" x2="164.00" y2="565.60" stroke="#9ca4b0" stroke-width="3.6" stroke-linecap="round" />
<circle cx="137.80" cy="578.50" r="3.40" fill="none" stroke="#9ca4b0" stroke-width="2.6" />
<line x1="148.50" y1="578.50" x2="164.00" y2="578.50" stroke="#9ca4b0" stroke-width="3.6" stroke-linecap="round" />
<circle cx="386.50" cy="563.85" r="10.60" fill="none" stroke="#6f7a85" stroke-width="1.8" />
<circle cx="386.50" cy="558.76" r="1.35" fill="#6f7a85" />
<line x1="386.50" y1="562.58" x2="386.50" y2="569.68" stroke="#6f7a85" stroke-width="2.2" stroke-linecap="butt" />
<path d="M476,561 V556 A5.85,5.85 0 0 1 487.7,556 V561" fill="none" stroke="#9ca4b0" stroke-width="3.2" stroke-linejoin="round" stroke-linecap="round" />
<rect x="469.00" y="560.00" width="25.70" height="22.00" rx="3" fill="#9ca4b0" />
<circle cx="481.85" cy="570.70" r="2.80" fill="#15181b" />
<rect x="535.00" y="550.30" width="29.70" height="30.40" rx="5.70" fill="none" stroke="#9ca4b0" stroke-width="2.6" />
<line x1="549.90" y1="554.50" x2="549.90" y2="576.50" stroke="#9ca4b0" stroke-width="2.6" stroke-linecap="round" />
<path d="M544.5,560 L549.9,554.5 L555.3,560 M544.5,571 L549.9,576.5 L555.3,571" fill="none" stroke="#9ca4b0" stroke-width="2.6" stroke-linejoin="round" stroke-linecap="round" />
<line x1="597.50" y1="558.70" x2="617.50" y2="558.70" stroke="#9ca4b0" stroke-width="3.6" stroke-linecap="round" />
<line x1="604.50" y1="566.90" x2="617.50" y2="566.90" stroke="#9ca4b0" stroke-width="3.6" stroke-linecap="round" />
<line x1="604.50" y1="575.00" x2="617.50" y2="575.00" stroke="#9ca4b0" stroke-width="3.6" stroke-linecap="round" />
<path d="M625.2,561.5 L630.6,556 L636,561.5 M625.2,571.5 L630.6,577 L636,571.5" fill="none" stroke="#9ca4b0" stroke-width="2.6" stroke-linejoin="round" stroke-linecap="round" />
<circle cx="145.00" cy="656.50" r="10.40" fill="none" stroke="#95a1ac" stroke-width="3" />
<line x1="152.50" y1="664.00" x2="162.00" y2="673.50" stroke="#95a1ac" stroke-width="3.2" stroke-linecap="butt" />
<rect x="137.60" y="731.00" width="22.80" height="37.70" rx="4" fill="#9ca4b0" />
<rect x="140.60" y="735.00" width="16.80" height="26.50" rx="1" fill="#15181b" />
<circle cx="149.00" cy="765.00" r="1.60" fill="#15181b" />
<path d="M169,799.5 L182.5,809.5 L169,819.5 L155.5,809.5 Z" fill="none" stroke="#9ca4b0" stroke-width="2.6" stroke-linejoin="round" stroke-linecap="round" />
<path d="M155.5,816 L169,826.5 L182.5,816" fill="none" stroke="#9ca4b0" stroke-width="2.6" stroke-linejoin="round" stroke-linecap="round" />
<line x1="177.20" y1="862.50" x2="177.20" y2="896.00" stroke="#9ca4b0" stroke-width="2.3" stroke-linecap="round" />
<line x1="200.30" y1="862.50" x2="200.30" y2="896.00" stroke="#9ca4b0" stroke-width="2.3" stroke-linecap="round" />
<rect x="185.60" y="863.70" width="6.70" height="6.00" rx="0.50" fill="none" stroke="#9ca4b0" stroke-width="2" />
<rect x="185.60" y="876.00" width="6.70" height="6.00" rx="0.50" fill="none" stroke="#9ca4b0" stroke-width="2" />
<rect x="185.60" y="889.00" width="6.70" height="6.00" rx="0.50" fill="none" stroke="#9ca4b0" stroke-width="2" />
<line x1="197.20" y1="925.50" x2="197.20" y2="959.00" stroke="#9ca4b0" stroke-width="2.3" stroke-linecap="round" />
<line x1="220.30" y1="925.50" x2="220.30" y2="959.00" stroke="#9ca4b0" stroke-width="2.3" stroke-linecap="round" />
<rect x="205.60" y="926.70" width="6.70" height="6.00" rx="0.50" fill="none" stroke="#9ca4b0" stroke-width="2" />
<rect x="205.60" y="939.00" width="6.70" height="6.00" rx="0.50" fill="none" stroke="#9ca4b0" stroke-width="2" />
<rect x="205.60" y="952.00" width="6.70" height="6.00" rx="0.50" fill="none" stroke="#9ca4b0" stroke-width="2" />
<g transform="translate(210.70,999.00) scale(1.0000,1.0000)"><rect x="1" y="1" width="32" height="14.5" rx="2.5" fill="none" stroke="#ffffff" stroke-width="2"/><rect x="4.5" y="5.5" width="11" height="5.5" rx="1" fill="#ffffff"/><rect x="20.5" y="3.5" width="10" height="9.5" rx="1.5" fill="#ffffff"/><path d="M22.8,8.3 L24.8,10.3 L28.5,5.8" fill="none" stroke="#1b1e22" stroke-width="1.5"/></g>
<g transform="translate(171.60,1054.00) scale(1.0515,1.0812)"><g fill="none" stroke="#4b39ef" stroke-width="3" stroke-linejoin="round" stroke-linecap="round"><path d="M7.8,1.2 H25.2 L31.6,9.9 L16.5,30.6 L1.4,9.9 Z M1.4,9.9 H31.6 M13,1.2 L11.4,9.9 L16.5,30.6 L21.6,9.9 L20,1.2"/></g></g>
<g transform="translate(563.00,735.00) scale(0.8049,0.8250)"><g fill="none" stroke="#9ca4b0" stroke-width="2.6" stroke-linecap="butt" stroke-linejoin="round"><path d="M20.4,1.6 H8 A6,6 0 0 0 2,7.6 V32.5 A6,6 0 0 0 8,38.5 H33 A6,6 0 0 0 39,32.5 V20"/><circle cx="13.2" cy="13" r="3.8"/><circle cx="13.2" cy="27" r="3.8"/><path d="M32.2,0.4 V15.4 M24.7,7.9 H39.7" stroke-linecap="round"/></g></g>
<path d="M628.5,746.5 H639.7 L634.1,753 Z" fill="#9ca4b0" />
<g transform="translate(563.00,799.00) scale(0.8049,0.8250)"><g fill="none" stroke="#9ca4b0" stroke-width="2.6" stroke-linecap="butt" stroke-linejoin="round"><path d="M20.4,1.6 H8 A6,6 0 0 0 2,7.6 V32.5 A6,6 0 0 0 8,38.5 H33 A6,6 0 0 0 39,32.5 V20"/><circle cx="13.2" cy="13" r="3.8"/><circle cx="13.2" cy="27" r="3.8"/><path d="M32.2,0.4 V15.4 M24.7,7.9 H39.7" stroke-linecap="round"/></g></g>
<path d="M628.5,810.5 H639.7 L634.1,817 Z" fill="#9ca4b0" />
<g transform="translate(563.00,863.00) scale(0.8049,0.8250)"><g fill="none" stroke="#9ca4b0" stroke-width="2.6" stroke-linecap="butt" stroke-linejoin="round"><path d="M20.4,1.6 H8 A6,6 0 0 0 2,7.6 V32.5 A6,6 0 0 0 8,38.5 H33 A6,6 0 0 0 39,32.5 V20"/><circle cx="13.2" cy="13" r="3.8"/><circle cx="13.2" cy="27" r="3.8"/><path d="M32.2,0.4 V15.4 M24.7,7.9 H39.7" stroke-linecap="round"/></g></g>
<path d="M628.5,874.5 H639.7 L634.1,881 Z" fill="#9ca4b0" />
<g transform="translate(563.00,927.00) scale(0.8049,0.8250)"><g fill="none" stroke="#9ca4b0" stroke-width="2.6" stroke-linecap="butt" stroke-linejoin="round"><path d="M20.4,1.6 H8 A6,6 0 0 0 2,7.6 V32.5 A6,6 0 0 0 8,38.5 H33 A6,6 0 0 0 39,32.5 V20"/><circle cx="13.2" cy="13" r="3.8"/><circle cx="13.2" cy="27" r="3.8"/><path d="M32.2,0.4 V15.4 M24.7,7.9 H39.7" stroke-linecap="round"/></g></g>
<path d="M628.5,938.5 H639.7 L634.1,945 Z" fill="#9ca4b0" />
<rect x="726.00" y="149.00" width="8.00" height="31.00" rx="4" fill="#9ca4b0" />
<path d="M752,157 L744.3,164.7 L752,172.4" fill="none" stroke="#9ca4b0" stroke-width="4.2" stroke-linejoin="round" stroke-linecap="round" />
<line x1="809.00" y1="166.00" x2="831.00" y2="166.00" stroke="#cfd3d7" stroke-width="3.2" stroke-linecap="butt" />
<line x1="961.00" y1="166.00" x2="983.00" y2="166.00" stroke="#cfd3d7" stroke-width="3.2" stroke-linecap="butt" />
<line x1="972.00" y1="155.00" x2="972.00" y2="177.00" stroke="#cfd3d7" stroke-width="3.2" stroke-linecap="butt" />
<rect x="1395.50" y="151.90" width="17.80" height="30.40" rx="2.50" fill="none" stroke="#fff" stroke-width="3" />
<rect x="1394.00" y="178.00" width="20.80" height="5.80" rx="3" fill="#fff" />
<rect x="1463.50" y="151.20" width="26.00" height="34.10" rx="4.50" fill="none" stroke="#9ca4b0" stroke-width="3" />
<path d="M1462,178.5 H1491 V181 Q1491,186.8 1485,186.8 H1468 Q1462,186.8 1462,181 Z" fill="#9ca4b0" />
<rect x="1530.85" y="152.25" width="34.90" height="26.50" rx="0.00" fill="none" stroke="#9ca4b0" stroke-width="2.5" />
<rect x="1529.60" y="174.00" width="37.40" height="6.00" rx="0" fill="#9ca4b0" />
<line x1="1548.30" y1="180.00" x2="1548.30" y2="184.00" stroke="#9ca4b0" stroke-width="2.2" stroke-linecap="butt" />
<path d="M1537,186 Q1548.3,182.5 1560,186" fill="none" stroke="#9ca4b0" stroke-width="2" stroke-linejoin="round" stroke-linecap="round" />
<circle cx="1737.50" cy="165.80" r="10.60" fill="none" stroke="#6f7a85" stroke-width="1.8" />
<circle cx="1737.50" cy="160.71" r="1.35" fill="#6f7a85" />
<line x1="1737.50" y1="164.53" x2="1737.50" y2="171.63" stroke="#6f7a85" stroke-width="2.2" stroke-linecap="butt" />
<circle cx="2176.00" cy="166.00" r="8.60" fill="#9ca4b0" />
<line x1="2176.00" y1="152.20" x2="2176.00" y2="149.00" stroke="#9ca4b0" stroke-width="3.3" stroke-linecap="round" />
<line x1="2185.76" y1="156.24" x2="2188.02" y2="153.98" stroke="#9ca4b0" stroke-width="3.3" stroke-linecap="round" />
<line x1="2189.80" y1="166.00" x2="2193.00" y2="166.00" stroke="#9ca4b0" stroke-width="3.3" stroke-linecap="round" />
<line x1="2185.76" y1="175.76" x2="2188.02" y2="178.02" stroke="#9ca4b0" stroke-width="3.3" stroke-linecap="round" />
<line x1="2176.00" y1="179.80" x2="2176.00" y2="183.00" stroke="#9ca4b0" stroke-width="3.3" stroke-linecap="round" />
<line x1="2166.24" y1="175.76" x2="2163.98" y2="178.02" stroke="#9ca4b0" stroke-width="3.3" stroke-linecap="round" />
<line x1="2162.20" y1="166.00" x2="2159.00" y2="166.00" stroke="#9ca4b0" stroke-width="3.3" stroke-linecap="round" />
<line x1="2166.24" y1="156.24" x2="2163.98" y2="153.98" stroke="#9ca4b0" stroke-width="3.3" stroke-linecap="round" />
<rect x="2250.60" y="152.60" width="4.80" height="4.80" rx="0.40" fill="none" stroke="#9ca4b0" stroke-width="2.2" />
<rect x="2273.10" y="152.60" width="4.80" height="4.80" rx="0.40" fill="none" stroke="#9ca4b0" stroke-width="2.2" />
<rect x="2250.60" y="177.10" width="4.80" height="4.80" rx="0.40" fill="none" stroke="#9ca4b0" stroke-width="2.2" />
<line x1="2256.50" y1="155.00" x2="2272.00" y2="155.00" stroke="#9ca4b0" stroke-width="2.2" stroke-linecap="butt" />
<line x1="2253.00" y1="158.50" x2="2253.00" y2="176.00" stroke="#9ca4b0" stroke-width="2.2" stroke-linecap="butt" />
<line x1="2275.50" y1="158.50" x2="2275.50" y2="163.00" stroke="#9ca4b0" stroke-width="2.2" stroke-linecap="butt" />
<line x1="2256.50" y1="179.50" x2="2261.00" y2="179.50" stroke="#9ca4b0" stroke-width="2.2" stroke-linecap="butt" />
<path d="M2276.80,174.80 L2276.80,174.94 L2276.79,175.08 L2276.78,175.22 L2276.77,175.35 L2276.75,175.49 L2276.73,175.63 L2276.98,175.82 L2277.34,176.04 L2277.70,176.29 L2278.07,176.56 L2278.42,176.85 L2278.76,177.16 L2279.07,177.48 L2279.25,177.77 L2279.17,177.98 L2279.08,178.18 L2278.99,178.37 L2278.90,178.57 L2278.79,178.76 L2278.69,178.95 L2278.58,179.14 L2278.46,179.32 L2278.34,179.50 L2278.21,179.68 L2278.08,179.85 L2277.95,180.02 L2277.60,180.01 L2277.17,179.91 L2276.74,179.77 L2276.31,179.61 L2275.89,179.43 L2275.49,179.23 L2275.12,179.04 L2274.84,178.92 L2274.73,179.00 L2274.62,179.09 L2274.50,179.17 L2274.39,179.24 L2274.27,179.32 L2274.15,179.39 L2274.03,179.46 L2273.91,179.52 L2273.78,179.58 L2273.66,179.64 L2273.53,179.70 L2273.40,179.75 L2273.36,180.05 L2273.34,180.47 L2273.31,180.91 L2273.26,181.37 L2273.19,181.82 L2273.09,182.27 L2272.96,182.69 L2272.80,183.00 L2272.58,183.03 L2272.37,183.05 L2272.15,183.07 L2271.93,183.09 L2271.72,183.10 L2271.50,183.10 L2271.28,183.10 L2271.07,183.09 L2270.85,183.07 L2270.63,183.05 L2270.42,183.03 L2270.20,183.00 L2270.04,182.69 L2269.91,182.27 L2269.81,181.82 L2269.74,181.37 L2269.69,180.91 L2269.66,180.47 L2269.64,180.05 L2269.60,179.75 L2269.47,179.70 L2269.34,179.64 L2269.22,179.58 L2269.09,179.52 L2268.97,179.46 L2268.85,179.39 L2268.73,179.32 L2268.61,179.24 L2268.50,179.17 L2268.38,179.09 L2268.27,179.00 L2268.16,178.92 L2267.88,179.04 L2267.51,179.23 L2267.11,179.43 L2266.69,179.61 L2266.26,179.77 L2265.83,179.91 L2265.40,180.01 L2265.05,180.02 L2264.92,179.85 L2264.79,179.68 L2264.66,179.50 L2264.54,179.32 L2264.42,179.14 L2264.31,178.95 L2264.21,178.76 L2264.10,178.57 L2264.01,178.37 L2263.92,178.18 L2263.83,177.98 L2263.75,177.77 L2263.93,177.48 L2264.24,177.16 L2264.58,176.85 L2264.93,176.56 L2265.30,176.29 L2265.66,176.04 L2266.02,175.82 L2266.27,175.63 L2266.25,175.49 L2266.23,175.35 L2266.22,175.22 L2266.21,175.08 L2266.20,174.94 L2266.20,174.80 L2266.20,174.66 L2266.21,174.52 L2266.22,174.38 L2266.23,174.25 L2266.25,174.11 L2266.27,173.97 L2266.02,173.78 L2265.66,173.56 L2265.30,173.31 L2264.93,173.04 L2264.58,172.75 L2264.24,172.44 L2263.93,172.12 L2263.75,171.83 L2263.83,171.62 L2263.92,171.42 L2264.01,171.23 L2264.10,171.03 L2264.21,170.84 L2264.31,170.65 L2264.42,170.46 L2264.54,170.28 L2264.66,170.10 L2264.79,169.92 L2264.92,169.75 L2265.05,169.58 L2265.40,169.59 L2265.83,169.69 L2266.26,169.83 L2266.69,169.99 L2267.11,170.17 L2267.51,170.37 L2267.88,170.56 L2268.16,170.68 L2268.27,170.60 L2268.38,170.51 L2268.50,170.43 L2268.61,170.36 L2268.73,170.28 L2268.85,170.21 L2268.97,170.14 L2269.09,170.08 L2269.22,170.02 L2269.34,169.96 L2269.47,169.90 L2269.60,169.85 L2269.64,169.55 L2269.66,169.13 L2269.69,168.69 L2269.74,168.23 L2269.81,167.78 L2269.91,167.33 L2270.04,166.91 L2270.20,166.60 L2270.42,166.57 L2270.63,166.55 L2270.85,166.53 L2271.07,166.51 L2271.28,166.50 L2271.50,166.50 L2271.72,166.50 L2271.93,166.51 L2272.15,166.53 L2272.37,166.55 L2272.58,166.57 L2272.80,166.60 L2272.96,166.91 L2273.09,167.33 L2273.19,167.78 L2273.26,168.23 L2273.31,168.69 L2273.34,169.13 L2273.36,169.55 L2273.40,169.85 L2273.53,169.90 L2273.66,169.96 L2273.78,170.02 L2273.91,170.08 L2274.03,170.14 L2274.15,170.21 L2274.27,170.28 L2274.39,170.36 L2274.50,170.43 L2274.62,170.51 L2274.73,170.60 L2274.84,170.68 L2275.12,170.56 L2275.49,170.37 L2275.89,170.17 L2276.31,169.99 L2276.74,169.83 L2277.17,169.69 L2277.60,169.59 L2277.95,169.58 L2278.08,169.75 L2278.21,169.92 L2278.34,170.10 L2278.46,170.28 L2278.58,170.46 L2278.69,170.65 L2278.79,170.84 L2278.90,171.03 L2278.99,171.23 L2279.08,171.42 L2279.17,171.62 L2279.25,171.83 L2279.07,172.12 L2278.76,172.44 L2278.42,172.75 L2278.07,173.04 L2277.70,173.31 L2277.34,173.56 L2276.98,173.78 L2276.73,173.97 L2276.75,174.11 L2276.77,174.25 L2276.78,174.38 L2276.79,174.52 L2276.80,174.66 Z" fill="#9ca4b0" />
<circle cx="2270.30" cy="174.60" r="2.00" fill="#15181b" />
<rect x="1954.60" y="242.10" width="27.20" height="9.20" rx="0.30" fill="none" stroke="#fff" stroke-width="2.4" />
<rect x="1963.50" y="244.50" width="10.00" height="4.50" rx="0" fill="#fff" />
<line x1="1957.00" y1="246.70" x2="1960.00" y2="246.70" stroke="#fff" stroke-width="1.2" stroke-linecap="round" />
<line x1="1958.50" y1="245.20" x2="1958.50" y2="248.20" stroke="#fff" stroke-width="1.2" stroke-linecap="round" />
<g transform="translate(2364.70,129.70) scale(0.8324,0.8485)"><rect x="1" y="1" width="32" height="14.5" rx="2.5" fill="none" stroke="#ffffff" stroke-width="2"/><rect x="4.5" y="5.5" width="11" height="5.5" rx="1" fill="#ffffff"/><rect x="20.5" y="3.5" width="10" height="9.5" rx="1.5" fill="#ffffff"/><path d="M22.8,8.3 L24.8,10.3 L28.5,5.8" fill="none" stroke="#1b1e22" stroke-width="1.5"/></g>
<g transform="translate(2717.00,186.00) scale(0.9091,0.9344)"><g fill="none" stroke="#fff" stroke-width="2.6" stroke-linejoin="round" stroke-linecap="round"><path d="M7.8,1.2 H25.2 L31.6,9.9 L16.5,30.6 L1.4,9.9 Z M1.4,9.9 H31.6 M13,1.2 L11.4,9.9 L16.5,30.6 L21.6,9.9 L20,1.2"/></g></g>
<g transform="translate(2793.30,186.00) scale(0.7244,0.7475)"><g fill="none" stroke="#fff" stroke-width="2.4" stroke-linecap="butt" stroke-linejoin="round"><path d="M20.4,1.6 H8 A6,6 0 0 0 2,7.6 V32.5 A6,6 0 0 0 8,38.5 H33 A6,6 0 0 0 39,32.5 V20"/><circle cx="13.2" cy="13" r="3.8"/><circle cx="13.2" cy="27" r="3.8"/><path d="M32.2,0.4 V15.4 M24.7,7.9 H39.7" stroke-linecap="round"/></g></g>
<g transform="translate(2869.00,186.00) scale(0.6146,0.6122)"><path d="M10.5,1.2 H46.3 L39.7,16.4 H3.5 Z M22.2,1.2 L28.8,16.4 M3.5,16.4 L7,24.6 H32.5 L29,16.4 M7,24.6 L1.4,37 V39.3 H25.3 L32.5,24.6 M8,25 L13.5,39.3 L6.5,47 L1.4,39.3" fill="none" stroke="#fff" stroke-width="2.1" stroke-linejoin="round" stroke-linecap="round"/></g>
<path d="M2427.4,274.3 L2436.5,283.5 L2411,308.8 L2401.9,299.8 Z" fill="none" stroke="#fff" stroke-width="3.2" stroke-linejoin="round" stroke-linecap="round" />
<line x1="2420.26" y1="281.44" x2="2423.44" y2="284.62" stroke="#fff" stroke-width="3" stroke-linecap="round" />
<line x1="2416.69" y1="285.01" x2="2418.95" y2="287.27" stroke="#fff" stroke-width="3" stroke-linecap="round" />
<line x1="2413.12" y1="288.58" x2="2416.30" y2="291.76" stroke="#fff" stroke-width="3" stroke-linecap="round" />
<line x1="2409.55" y1="292.15" x2="2411.81" y2="294.41" stroke="#fff" stroke-width="3" stroke-linecap="round" />
<line x1="2405.98" y1="295.72" x2="2409.16" y2="298.90" stroke="#fff" stroke-width="3" stroke-linecap="round" />
<path d="M2407.4,286.9 L2401.9,281.2 L2408.5,274.6 L2414.6,280.3" fill="none" stroke="#fff" stroke-width="3.2" stroke-linejoin="round" stroke-linecap="round" />
<path d="M2431.2,296.7 L2434.6,300.5 L2437,309.6 L2426.8,306.9 L2423.6,303.2" fill="none" stroke="#fff" stroke-width="3.2" stroke-linejoin="round" stroke-linecap="round" />
<circle cx="2514.70" cy="278.20" r="4.60" fill="#9ca4b0" />
<circle cx="2537.00" cy="306.30" r="4.60" fill="#9ca4b0" />
<path d="M2514.7,278.2 Q2521,287 2521,295 Q2522,306.3 2537,306.3" fill="none" stroke="#9ca4b0" stroke-width="2.6" stroke-linejoin="round" stroke-linecap="round" />
<path d="M2531.7,273.5 L2548.6,282.4 L2540,285 L2531.7,291.5 Z" fill="none" stroke="#9ca4b0" stroke-width="2.8" stroke-linejoin="round" stroke-linecap="round" />
<line x1="2539.50" y1="286.00" x2="2545.00" y2="296.20" stroke="#9ca4b0" stroke-width="2.8" stroke-linecap="round" />
<g transform="translate(2622.20,272.40) scale(0.9553,0.9550)"><g fill="none" stroke="#9ca4b0" stroke-width="3" stroke-linejoin="round"><rect x="1.5" y="1.5" width="35" height="12.6" rx="3.2"/><rect x="1.5" y="14.1" width="35" height="12.4" rx="3.2"/><rect x="1.5" y="26.5" width="35" height="12" rx="3.2"/></g><g fill="#9ca4b0"><circle cx="25" cy="8" r="2"/><circle cx="30.9" cy="8" r="2"/><circle cx="25" cy="20.3" r="2"/><circle cx="30.9" cy="20.3" r="2"/><circle cx="25" cy="32.9" r="2"/><circle cx="30.9" cy="32.9" r="2"/></g></g>
<path d="M2743.3,278 L2762.4,289.9 L2743.3,302.1 Z" fill="#9ca4b0" />
<path d="M2864.5,275.5 H2852.5 Q2845.5,275.5 2845.5,282.5 V301.2 Q2845.5,308.2 2852.5,308.2 H2866.9 Q2873.9,308.2 2873.9,301.2 V289" fill="none" stroke="#9ca4b0" stroke-width="3" stroke-linejoin="round" stroke-linecap="butt" />
<line x1="2872.60" y1="273.20" x2="2872.60" y2="284.20" stroke="#9ca4b0" stroke-width="3" stroke-linecap="round" />
<line x1="2867.10" y1="278.70" x2="2878.10" y2="278.70" stroke="#9ca4b0" stroke-width="3" stroke-linecap="round" />
<line x1="2852.40" y1="283.50" x2="2858.30" y2="283.50" stroke="#9ca4b0" stroke-width="3" stroke-linecap="round" />
<line x1="2852.40" y1="291.50" x2="2867.50" y2="291.50" stroke="#9ca4b0" stroke-width="3" stroke-linecap="round" />
<line x1="2852.40" y1="299.40" x2="2867.50" y2="299.40" stroke="#9ca4b0" stroke-width="3" stroke-linecap="round" />
<circle cx="2717.90" cy="391.05" r="10.20" fill="none" stroke="#6f7a85" stroke-width="1.8" />
<circle cx="2717.90" cy="386.15" r="1.35" fill="#6f7a85" />
<line x1="2717.90" y1="389.83" x2="2717.90" y2="396.66" stroke="#6f7a85" stroke-width="2.2" stroke-linecap="butt" />
<path d="M2886.5,383.5 L2898.5,396 L2910.5,383.5" fill="none" stroke="#9ca4b0" stroke-width="2.6" stroke-linejoin="round" stroke-linecap="round" />
<g transform="translate(2618.00,429.50) scale(1.0)"><g fill="none" stroke="#e08c62" stroke-width="2.4" stroke-linecap="round"><circle cx="5.2" cy="5" r="3.4"/><circle cx="20.6" cy="19.1" r="3.4"/><path d="M15.2,5 H25 M1.2,19.1 H11"/></g></g>
<g transform="translate(2478.00,549.40) scale(1.0)"><g fill="none" stroke="#e08c62" stroke-width="2.4" stroke-linecap="round"><circle cx="5.2" cy="5" r="3.4"/><circle cx="20.6" cy="19.1" r="3.4"/><path d="M15.2,5 H25 M1.2,19.1 H11"/></g></g>
<g transform="translate(2541.30,669.00) scale(1.0)"><g fill="none" stroke="#e08c62" stroke-width="2.4" stroke-linecap="round"><circle cx="5.2" cy="5" r="3.4"/><circle cx="20.6" cy="19.1" r="3.4"/><path d="M15.2,5 H25 M1.2,19.1 H11"/></g></g>
<g transform="translate(2853.00,669.00) scale(1.0)"><g fill="none" stroke="#e08c62" stroke-width="2.4" stroke-linecap="round"><circle cx="5.2" cy="5" r="3.4"/><circle cx="20.6" cy="19.1" r="3.4"/><path d="M15.2,5 H25 M1.2,19.1 H11"/></g></g>
<g transform="translate(2513.00,789.50) scale(1.0)"><g fill="none" stroke="#e08c62" stroke-width="2.4" stroke-linecap="round"><circle cx="5.2" cy="5" r="3.4"/><circle cx="20.6" cy="19.1" r="3.4"/><path d="M15.2,5 H25 M1.2,19.1 H11"/></g></g>
<line x1="2585.50" y1="608.50" x2="2602.50" y2="625.50" stroke="#95a1ac" stroke-width="2.6" stroke-linecap="butt" />
<line x1="2585.50" y1="625.50" x2="2602.50" y2="608.50" stroke="#95a1ac" stroke-width="2.6" stroke-linecap="butt" />
<line x1="2585.50" y1="728.50" x2="2602.50" y2="745.50" stroke="#95a1ac" stroke-width="2.6" stroke-linecap="butt" />
<line x1="2585.50" y1="745.50" x2="2602.50" y2="728.50" stroke="#95a1ac" stroke-width="2.6" stroke-linecap="butt" />
<line x1="2871.00" y1="728.50" x2="2888.50" y2="745.50" stroke="#95a1ac" stroke-width="2.6" stroke-linecap="butt" />
<line x1="2871.00" y1="745.50" x2="2888.50" y2="728.50" stroke="#95a1ac" stroke-width="2.6" stroke-linecap="butt" />
<line x1="2585.50" y1="848.30" x2="2602.50" y2="865.30" stroke="#95a1ac" stroke-width="2.6" stroke-linecap="butt" />
<line x1="2585.50" y1="865.30" x2="2602.50" y2="848.30" stroke="#95a1ac" stroke-width="2.6" stroke-linecap="butt" />
<circle cx="2571.05" cy="926.90" r="10.45" fill="none" stroke="#6f7a85" stroke-width="1.8" />
<circle cx="2571.05" cy="921.88" r="1.35" fill="#6f7a85" />
<line x1="2571.05" y1="925.65" x2="2571.05" y2="932.65" stroke="#6f7a85" stroke-width="2.2" stroke-linecap="butt" />
<line x1="2630.50" y1="916.50" x2="2646.00" y2="916.50" stroke="#fff" stroke-width="2.4" stroke-linecap="butt" />
<line x1="2630.50" y1="937.00" x2="2646.00" y2="937.00" stroke="#fff" stroke-width="2.4" stroke-linecap="butt" />
<line x1="2627.80" y1="919.50" x2="2627.80" y2="934.00" stroke="#fff" stroke-width="2.4" stroke-linecap="butt" />
<line x1="2648.80" y1="919.50" x2="2648.80" y2="934.00" stroke="#fff" stroke-width="2.4" stroke-linecap="butt" />
<rect x="2685.00" y="918.30" width="18.30" height="17.80" rx="1.20" fill="none" stroke="#9ca4b0" stroke-width="2.6" />
<g transform="translate(2833.00,913.40)"><g fill="none" stroke="#9ca4b0" stroke-width="2.3" stroke-linejoin="round" stroke-linecap="round"><path d="M5.5,24 Q1.5,22.5 1.5,18 V6 Q1.5,0.7 6.8,0.7 H15 Q20,0.7 21.5,4.5"/><rect x="7.2" y="5.2" width="21" height="23.4" rx="5.5"/><path d="M21.2,14 A4.6,4.6 0 1 0 21.2,19.9"/></g></g>
<g transform="translate(2881.60,915.00)"><g fill="none" stroke="#9ca4b0" stroke-width="2.4" stroke-linecap="round" stroke-linejoin="round"><path d="M3.5,7.5 A11,11 0 1 1 7,23.5"/><path d="M2.5,1.5 V8.5 H9.5"/></g></g>
<line x1="2628.00" y1="968.50" x2="2652.00" y2="968.50" stroke="#9ca4b0" stroke-width="2" stroke-linecap="round" />
<rect x="2633.80" y="973.30" width="12.40" height="3.40" rx="1.70" fill="none" stroke="#9ca4b0" stroke-width="1.6" />
<line x1="2628.00" y1="1110.00" x2="2652.00" y2="1110.00" stroke="#9ca4b0" stroke-width="2" stroke-linecap="round" />
<rect x="2633.80" y="1101.30" width="12.40" height="3.40" rx="1.70" fill="none" stroke="#9ca4b0" stroke-width="1.6" />
<line x1="2374.90" y1="1027.00" x2="2374.90" y2="1051.00" stroke="#9ca4b0" stroke-width="2" stroke-linecap="round" />
<rect x="2379.30" y="1033.30" width="3.40" height="10.90" rx="1.70" fill="none" stroke="#9ca4b0" stroke-width="1.6" />
<line x1="2905.20" y1="1027.00" x2="2905.20" y2="1051.00" stroke="#9ca4b0" stroke-width="2" stroke-linecap="round" />
<rect x="2896.30" y="1033.30" width="3.40" height="10.90" rx="1.70" fill="none" stroke="#9ca4b0" stroke-width="1.6" />
<circle cx="2538.50" cy="1158.80" r="10.60" fill="none" stroke="#6f7a85" stroke-width="1.8" />
<circle cx="2538.50" cy="1153.71" r="1.35" fill="#6f7a85" />
<line x1="2538.50" y1="1157.53" x2="2538.50" y2="1164.63" stroke="#6f7a85" stroke-width="2.2" stroke-linecap="butt" />
<path d="M2587.8,1153 Q2587.8,1147 2593.8,1147 M2605.5,1147 Q2611.5,1147 2611.5,1153 M2611.5,1163.5 Q2611.5,1169.5 2605.5,1169.5 M2593.8,1169.5 Q2587.8,1169.5 2587.8,1163.5" fill="none" stroke="#9ca4b0" stroke-width="2.5" stroke-linejoin="round" stroke-linecap="butt" />
<rect x="2643.90" y="1147.10" width="23.30" height="22.50" rx="5.60" fill="none" stroke="#fff" stroke-width="2.8" />
<g transform="translate(2833.00,1145.00)"><g fill="none" stroke="#9ca4b0" stroke-width="2.3" stroke-linejoin="round" stroke-linecap="round"><path d="M5.5,24 Q1.5,22.5 1.5,18 V6 Q1.5,0.7 6.8,0.7 H15 Q20,0.7 21.5,4.5"/><rect x="7.2" y="5.2" width="21" height="23.4" rx="5.5"/><path d="M21.2,14 A4.6,4.6 0 1 0 21.2,19.9"/></g></g>
<g transform="translate(2881.60,1146.50)"><g fill="none" stroke="#9ca4b0" stroke-width="2.4" stroke-linecap="round" stroke-linejoin="round"><path d="M3.5,7.5 A11,11 0 1 1 7,23.5"/><path d="M2.5,1.5 V8.5 H9.5"/></g></g>
<g transform="translate(2871.00,1209.40) scale(1.0)"><g fill="none" stroke="#e08c62" stroke-width="2.4" stroke-linecap="round"><circle cx="5.2" cy="5" r="3.4"/><circle cx="20.6" cy="19.1" r="3.4"/><path d="M15.2,5 H25 M1.2,19.1 H11"/></g></g>
<circle cx="2587.05" cy="1489.15" r="10.45" fill="none" stroke="#6f7a85" stroke-width="1.8" />
<circle cx="2587.05" cy="1484.13" r="1.35" fill="#6f7a85" />
<line x1="2587.05" y1="1487.90" x2="2587.05" y2="1494.90" stroke="#6f7a85" stroke-width="2.2" stroke-linecap="butt" />
<circle cx="2692.75" cy="1644.80" r="10.35" fill="none" stroke="#6f7a85" stroke-width="1.8" />
<circle cx="2692.75" cy="1639.83" r="1.35" fill="#6f7a85" />
<line x1="2692.75" y1="1643.56" x2="2692.75" y2="1650.49" stroke="#6f7a85" stroke-width="2.2" stroke-linecap="butt" />
<path d="M2836,1550.6 H2867 Q2873,1550.6 2873,1556.6 V1599 L2863,1592 H2836 Q2830,1592 2830,1586 V1556.6 Q2830,1550.6 2836,1550.6 Z" fill="#fff" />
<path d="M2840,1576.5 Q2851.5,1588 2863,1576.5" fill="none" stroke="#4b39ef" stroke-width="2.8" stroke-linejoin="round" stroke-linecap="round" />
</svg>
</body></html>
